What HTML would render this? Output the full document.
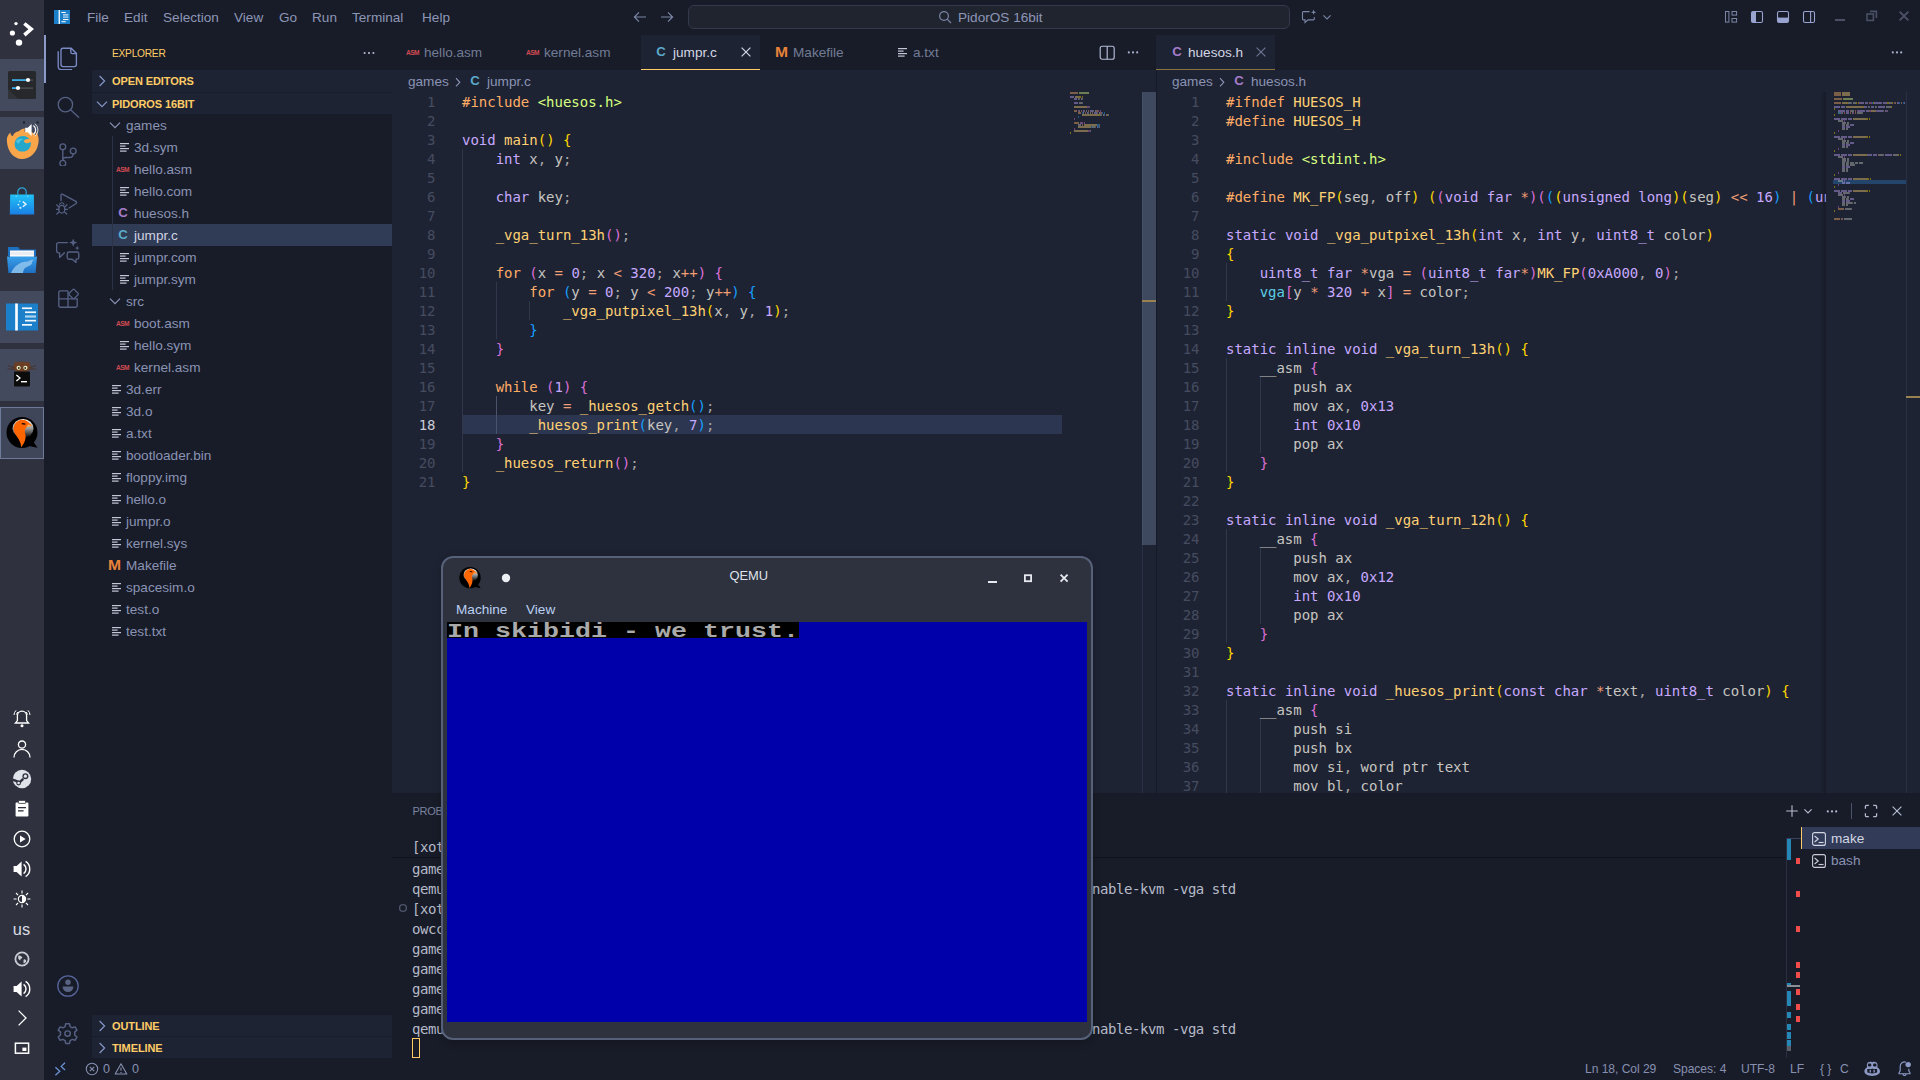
<!DOCTYPE html>
<html lang="en"><head><meta charset="utf-8"><title>jumpr.c - PidorOS 16bit - Visual Studio Code</title>
<style>
*{box-sizing:border-box;margin:0;padding:0}
html,body{width:1920px;height:1080px;overflow:hidden;background:#181c28;font-family:"Liberation Sans", "DejaVu Sans", sans-serif;font-size:13.6px;color:#8a93b4}
.abs{position:absolute}
div,span,i,svg{position:absolute}
.cl span,.t span,.row span.lbl,.inl{position:static}
.t{white-space:pre;line-height:1}
.lnum{width:40px;text-align:right;font:14px/19px "DejaVu Sans Mono", "Liberation Mono", monospace;height:19px;padding-top:1px}
.cl{font:14px/19px "DejaVu Sans Mono", "Liberation Mono", monospace;letter-spacing:-0.02px;white-space:pre;color:#c6c5c0;height:19px;padding-top:1px}
.ig{width:1px;height:19px;background:#31374a}
.row{left:92px;width:300px;height:22px;line-height:22px;white-space:pre}
.term{font:14px/20px "DejaVu Sans Mono", "Liberation Mono", monospace;letter-spacing:-0.43px;white-space:pre;color:#b6bac8;height:20px}
</style></head>
<body>
<div style="left:0px;top:0px;width:44px;height:1080px;background:#2f323e;"></div>
<div style="left:0px;top:59px;width:44px;height:52px;background:#434a5e;"></div>
<div style="left:0px;top:117px;width:44px;height:52px;background:#434a5e;"></div>
<div style="left:0px;top:291px;width:44px;height:52px;background:#434a5e;"></div>
<div style="left:0px;top:349px;width:44px;height:52px;background:#434a5e;"></div>
<div style="left:0px;top:407px;width:44px;height:52px;background:#3f4659;border:1px solid #6f7a99"></div>
<svg style="left:6px;top:19px;" width="32" height="32" viewBox="0 0 32 32"><circle cx="10" cy="4.6" r="1.7" fill="#fff"/><circle cx="6.4" cy="14" r="2.6" fill="#fff"/><circle cx="13" cy="23.6" r="3.2" fill="#fff"/><path d="M19.5 3.2 L28 10 L19.5 17.4 L17.2 14.6 L22.4 10.2 L17.2 5.8 Z" fill="#fff"/></svg>
<svg style="left:6px;top:69px;" width="32" height="32" viewBox="0 0 32 32"><rect x="2" y="2" width="28" height="28" rx="1.5" fill="#26282b"/><path d="M2 20 L12 30 H2Z" fill="#303337"/>
<rect x="6" y="10.2" width="15" height="1.8" fill="#3daee9"/><rect x="21" y="10.6" width="6" height="1" fill="#5b5f66"/><circle cx="22" cy="11" r="2.1" fill="#fff"/>
<rect x="6" y="18.2" width="5" height="1.8" fill="#3daee9"/><rect x="11" y="18.6" width="16" height="1" fill="#5b5f66"/><circle cx="12" cy="19" r="2.1" fill="#fff"/></svg>
<svg style="left:4px;top:121px;" width="40" height="40" viewBox="0 0 40 40"><path d="M3 21 C2.4 16 4.4 13 6.4 11.4 C6.4 13.4 7.4 14.6 8.8 15 C9.6 12.4 12 10.6 15 10.2 C16.6 8.6 19 7.4 21.4 7.6 C20.4 8.6 20.2 10 21 11 C25 9.6 29.4 11 31.6 14.4 C32.2 13 32 11.6 31.4 10.4 C34.4 13 35.4 18 34.2 23 C32.6 32 25.4 38 18 38 C9.4 38 3.6 30 3 21Z" fill="#f9a64a"/>
<path d="M10.6 23.4 C10.6 18.4 14.4 15 19 15 C22 15 24.4 16.4 25.4 18.4 C22.8 17.6 20.6 18.4 19.8 20.4 C21.4 22.6 24.6 22.6 26.8 21 C27.6 26 24 30.6 18.8 30.6 C14 30.6 10.6 27.4 10.6 23.4Z" fill="#23a8cc"/>
<path d="M12 20 C14 17.6 17.4 17 20 18.6 C17.4 18.8 15.6 20.2 15 22.4 C13.6 22.4 12.4 21.4 12 20Z" fill="#4fc3e0"/>
<rect x="19" y="0.5" width="2" height="2" fill="#1b1e26"/><rect x="32.6" y="0.5" width="2" height="2" fill="#1b1e26"/>
<path d="M21.2 6.8 h2.6 l3.8 -3.8 v12 l-3.8 -3.8 h-2.6Z" fill="#fff"/><path d="M29.4 4.6 a5.4 5.4 0 0 1 0 8.8" stroke="#fff" stroke-width="1.2" fill="none"/><path d="M31 2.8 a8 8 0 0 1 0 12.4" stroke="#fff" stroke-width="1" fill="none" opacity=".75"/></svg>
<svg style="left:6px;top:185px;" width="32" height="32" viewBox="0 0 32 32"><defs><linearGradient id="bag" x1="0" y1="0" x2="0" y2="1"><stop offset="0" stop-color="#21c3f7"/><stop offset="1" stop-color="#1a7fe3"/></linearGradient></defs>
<path d="M11.8 9.4 V7 a4.2 4.2 0 0 1 8.4 0 V9.4" fill="none" stroke="#2aa5d8" stroke-width="1.2"/>
<path d="M4.2 9.4 H27.8 L28.2 29.4 H3.8Z" fill="url(#bag)"/><rect x="9.6" y="10.6" width="1.2" height="1.2" fill="#8fe0ff"/><rect x="21.2" y="10.6" width="1.2" height="1.2" fill="#8fe0ff"/>
<circle cx="13.8" cy="16.2" r=".7" fill="#cfeeff"/><circle cx="12.4" cy="19.6" r=".9" fill="#cfeeff"/><circle cx="14.4" cy="22.8" r="1.1" fill="#cfeeff"/><path d="M16.8 16.6 L20 19.2 L16.8 21.8" fill="none" stroke="#e8f7ff" stroke-width="1.4"/></svg>
<svg style="left:6px;top:243px;" width="32" height="32" viewBox="0 0 32 32"><defs><linearGradient id="fld" x1="0" y1="0" x2="0" y2="1"><stop offset="0" stop-color="#3aa0ea"/><stop offset="1" stop-color="#1f6fc2"/></linearGradient></defs>
<path d="M2 4 H12 L14 6.5 H30 V13 H2Z" fill="#1d6fc0"/><rect x="4" y="7.5" width="24" height="8" fill="#fbfbfb"/><rect x="4" y="9" width="24" height="3" fill="#e9edf2"/>
<path d="M1 13.5 H31 L29.6 30 H2.4Z" fill="url(#fld)"/>
<path d="M5 30 C8 22.6 15 18 22 18.4 C24 16.8 26.4 16.4 28 17 C26.4 18 25.8 19 26 20.4 C24 23.6 20.6 23 18.6 25.6 C17.6 27 17 28.6 17 30Z" fill="#8ec4ee" opacity=".85"/></svg>
<svg style="left:6px;top:301px;" width="32" height="32" viewBox="0 0 32 32"><rect x="0" y="2.5" width="32" height="27" fill="#1b7fca"/><rect x="9.2" y="2.5" width="2.6" height="27" fill="#fff"/>
<rect x="16" y="6.4" width="10" height="1.7" fill="#fff" opacity=".95"/><rect x="19" y="10.4" width="11" height="1.7" fill="#fff" opacity=".95"/><rect x="19" y="14.4" width="11" height="2.2" fill="#bfe0f6" opacity=".9"/><rect x="19" y="18.8" width="11" height="1.7" fill="#fff" opacity=".95"/><rect x="16" y="23" width="10" height="1.7" fill="#fff" opacity=".95"/></svg>
<svg style="left:6px;top:359px;" width="32" height="32" viewBox="0 0 32 32"><path d="M7.5 6 L9.5 2.2 L13 4.6 H19 L22.5 2.2 L24.5 6 V11 H7.5Z" fill="#6b3f26"/><ellipse cx="16" cy="8" rx="8.6" ry="5.4" fill="#6b3f26"/>
<circle cx="12.6" cy="8.8" r="2.1" fill="#e9e9c0"/><circle cx="19.4" cy="8.8" r="2.1" fill="#e9e9c0"/><circle cx="12.8" cy="9" r=".9" fill="#222"/><circle cx="19.2" cy="9" r=".9" fill="#222"/>
<path d="M2 6.5 L9 9 M1.5 10 L9 10.2 M30 6.5 L23 9 M30.5 10 L23 10.2" stroke="#4a2a18" stroke-width=".7"/>
<rect x="8" y="12.5" width="16" height="15" rx="1" fill="#0c0c0c"/><path d="M10.4 16 L14 19 L10.4 22" fill="none" stroke="#fff" stroke-width="1.3"/><rect x="15" y="22" width="6" height="1.4" fill="#fff"/></svg>
<svg style="left:6px;top:417px;" width="32" height="32" viewBox="0 0 32 32"><defs><linearGradient id="qg32" x1="0" y1="0" x2="0" y2="1"><stop offset="0" stop-color="#fff"/><stop offset=".5" stop-color="#9a9a9a"/><stop offset="1" stop-color="#000"/></linearGradient></defs>
<circle cx="16" cy="15.5" r="15.5" fill="#000"/>
<ellipse cx="17" cy="11.5" rx="10.5" ry="9.5" fill="url(#qg32)"/>
<path d="M23 29 L31.5 30.8 L26.6 23.6Z" fill="#000"/>
<path d="M7.6 11 C8.6 4 15.6 0.8 21.2 4.2 L26.2 8.8 L20.6 9.8 C18.2 12.6 18.6 15.6 19.6 18.6 C20 23 17.6 27.4 15.2 30.4 C15 25 12.4 21.6 10.2 18.4 C8.4 15.8 7.2 14 7.6 11Z" fill="#f60"/>
<path d="M20.6 9.8 L26.2 8.8 L22 7.6Z" fill="#ffb36b"/><path d="M15.8 6.6 l3.6 .5" stroke="#000" stroke-width="1.3"/></svg>
<svg style="left:11px;top:708px;" width="22" height="22" viewBox="0 0 22 22"><path d="M11 3.2 a4.6 4.6 0 0 1 4.6 4.6 v4.8 l2 2.4 H4.4 l2 -2.4 V7.8 A4.6 4.6 0 0 1 11 3.2Z" fill="none" stroke="#fff" stroke-width="1.3"/><circle cx="11" cy="17.8" r="1.5" fill="#fff"/><path d="M5 2.4 a7 7 0 0 0 -2 4.6 M17 2.4 a7 7 0 0 1 2 4.6 M6.8 4 a4.6 4.6 0 0 0 -1.2 2.6 M15.2 4 a4.6 4.6 0 0 1 1.2 2.6" fill="none" stroke="#fff" stroke-width="1"/></svg>
<svg style="left:11px;top:738px;" width="22" height="22" viewBox="0 0 22 22"><circle cx="11" cy="6.6" r="3.6" fill="none" stroke="#fff" stroke-width="1.3"/><path d="M3 19.4 a8 8 0 0 1 16 0" fill="none" stroke="#fff" stroke-width="1.3"/></svg>
<svg style="left:11px;top:768px;" width="22" height="22" viewBox="0 0 22 22"><circle cx="11" cy="11" r="9.2" fill="#dfe3ea"/><path d="M1.8 11.6 L8.6 14.4 L12.2 10.8 L12.2 10.8" stroke="#2f323e" stroke-width="2.4" fill="none"/><circle cx="14.4" cy="8.2" r="3" fill="#2f323e"/><circle cx="14.4" cy="8.2" r="1.6" fill="#dfe3ea"/><circle cx="7.6" cy="15" r="2.4" fill="#2f323e"/><circle cx="7.6" cy="15" r="1.3" fill="#dfe3ea"/></svg>
<svg style="left:11px;top:798px;" width="22" height="22" viewBox="0 0 22 22"><rect x="4.6" y="4.6" width="12.8" height="14" rx=".8" fill="#fff"/><rect x="7.4" y="2.4" width="7.2" height="3" rx=".6" fill="#fff" stroke="#2f323e" stroke-width=".8"/><rect x="7" y="9" width="8" height="1.3" fill="#2f323e"/><rect x="7" y="12.2" width="5.6" height="1.3" fill="#2f323e"/></svg>
<svg style="left:11px;top:828px;" width="22" height="22" viewBox="0 0 22 22"><circle cx="11" cy="11" r="7.8" fill="none" stroke="#fff" stroke-width="1.3"/><path d="M9 7.4 L14.6 11 L9 14.6Z" fill="#fff"/></svg>
<svg style="left:11px;top:858px;" width="22" height="22" viewBox="0 0 22 22"><path d="M2.6 8 h3 l5 -4.6 v15.2 l-5 -4.6 h-3Z" fill="#fff"/><path d="M12.6 6.4 a5.6 5.6 0 0 1 0 9.2" stroke="#fff" stroke-width="1.4" fill="none"/><path d="M14.6 3.4 a9 9 0 0 1 0 15.2" stroke="#fff" stroke-width="1.4" fill="none"/></svg>
<svg style="left:11px;top:888px;" width="22" height="22" viewBox="0 0 22 22"><circle cx="11" cy="11" r="3.6" fill="none" stroke="#fff" stroke-width="1.2"/><path d="M11 7.4 a3.6 3.6 0 0 1 0 7.2Z" fill="#fff"/><path d="M11 2.6 v3 M11 16.4 v3 M2.6 11 h3 M16.4 11 h3 M5 5 l2.1 2.1 M14.9 14.9 l2.1 2.1 M5 17 l2.1 -2.1 M14.9 7.1 l2.1 -2.1" stroke="#fff" stroke-width="1.1"/></svg>
<div style="left:12.8px;top:917.5px;font-size:16.4px;line-height:23px;height:23px;white-space:pre;color:#d9dce3;">us</div>
<svg style="left:11px;top:948px;" width="22" height="22" viewBox="0 0 22 22"><circle cx="11" cy="11" r="6.6" fill="none" stroke="#c9ccd3" stroke-width="1.8"/><path d="M7.4 7.6 c2 -.6 3 1 4 1.6 c-.4 1.6 -2.4 1.4 -2.2 3.4 c-1.6 -.6 -2.8 -3 -1.8 -5Z M12.8 11.4 c1.6 -.2 2.6 .8 2.4 2.4 c-1 1.4 -2 1.8 -2.8 1.2 c.6 -1.2 -.4 -2.4 .4 -3.6Z" fill="#c9ccd3"/></svg>
<svg style="left:11px;top:978px;" width="22" height="22" viewBox="0 0 22 22"><path d="M2.6 8 h3 l5 -4.6 v15.2 l-5 -4.6 h-3Z" fill="#fff"/><path d="M12.6 6.4 a5.6 5.6 0 0 1 0 9.2" stroke="#fff" stroke-width="1.4" fill="none"/><path d="M14.6 3.4 a9 9 0 0 1 0 15.2" stroke="#fff" stroke-width="1.4" fill="none"/></svg>
<svg style="left:11px;top:1007px;" width="22" height="22" viewBox="0 0 22 22"><path d="M7.6 3.6 L15 11 L7.6 18.4" fill="none" stroke="#fff" stroke-width="1.3"/></svg>
<svg style="left:11px;top:1037px;" width="22" height="22" viewBox="0 0 22 22"><rect x="4.4" y="6.2" width="13.2" height="10" fill="none" stroke="#fff" stroke-width="1.5"/><rect x="11.4" y="10.6" width="4" height="3.4" fill="#fff"/></svg>
<div style="left:44px;top:0px;width:1876px;height:35px;background:#181c28;"></div>
<div style="left:44px;top:35px;width:48px;height:1023px;background:#181c28;"></div>
<div style="left:92px;top:35px;width:300px;height:1023px;background:#181c28;"></div>
<div style="left:392px;top:35px;width:1528px;height:35px;background:#181c28;"></div>
<div style="left:392px;top:70px;width:765px;height:723px;background:#1e2333;"></div>
<div style="left:1157px;top:70px;width:763px;height:723px;background:#1e2333;"></div>
<div style="left:1156px;top:70px;width:1px;height:723px;background:#171a26;"></div>
<div style="left:392px;top:793px;width:1528px;height:265px;background:#181c28;"></div>
<div style="left:44px;top:1058px;width:1876px;height:22px;background:#181c28;"></div>
<svg style="left:54px;top:10px;" width="16" height="14" viewBox="0 0 16 14"><rect width="16" height="14" fill="#1b7fca"/><rect x="4.6" y="0" width="1.3" height="14" fill="#fff"/><rect x="7.4" y="2" width="4.4" height="1" fill="#fff"/><rect x="9" y="4.4" width="5.4" height="1" fill="#fff"/><rect x="9" y="6.4" width="5.4" height="1.4" fill="#a9d3f0"/><rect x="9" y="9" width="5.4" height="1" fill="#fff"/><rect x="7.4" y="11.2" width="4.4" height="1" fill="#fff"/></svg>
<div style="left:87px;top:7.5px;font-size:13.6px;line-height:19px;height:19px;white-space:pre;color:#8d96b6;">File</div>
<div style="left:124px;top:7.5px;font-size:13.6px;line-height:19px;height:19px;white-space:pre;color:#8d96b6;">Edit</div>
<div style="left:163px;top:7.5px;font-size:13.6px;line-height:19px;height:19px;white-space:pre;color:#8d96b6;">Selection</div>
<div style="left:234px;top:7.5px;font-size:13.6px;line-height:19px;height:19px;white-space:pre;color:#8d96b6;">View</div>
<div style="left:279px;top:7.5px;font-size:13.6px;line-height:19px;height:19px;white-space:pre;color:#8d96b6;">Go</div>
<div style="left:312px;top:7.5px;font-size:13.6px;line-height:19px;height:19px;white-space:pre;color:#8d96b6;">Run</div>
<div style="left:352px;top:7.5px;font-size:13.6px;line-height:19px;height:19px;white-space:pre;color:#8d96b6;">Terminal</div>
<div style="left:422px;top:7.5px;font-size:13.6px;line-height:19px;height:19px;white-space:pre;color:#8d96b6;">Help</div>
<svg style="left:632px;top:9px;" width="16" height="16" viewBox="0 0 16 16"><path d="M14 8 H2.6 M7 3.4 L2.4 8 L7 12.6" fill="none" stroke="#7b85a6" stroke-width="1.2"/></svg>
<svg style="left:659px;top:9px;" width="16" height="16" viewBox="0 0 16 16"><path d="M2 8 H13.4 M9 3.4 L13.6 8 L9 12.6" fill="none" stroke="#7b85a6" stroke-width="1.2"/></svg>
<div style="left:688px;top:5px;width:602px;height:24px;background:#20242f;border:1px solid #343a4d;border-radius:6px"></div>
<svg style="left:937px;top:9px;" width="16" height="16" viewBox="0 0 16 16"><circle cx="7" cy="7" r="4.4" fill="none" stroke="#7b85a6" stroke-width="1.2"/><path d="M10.2 10.2 L14 14" stroke="#7b85a6" stroke-width="1.2"/></svg>
<div style="left:958px;top:7.5px;font-size:13.6px;line-height:19px;height:19px;white-space:pre;color:#8d96b6;">PidorOS 16bit</div>
<svg style="left:1301px;top:9px;" width="16" height="16" viewBox="0 0 16 16"><path d="M8.6 2.6 H2.4 a.9 .9 0 0 0 -.9 .9 V10 a.9 .9 0 0 0 .9 .9 H4 v2.6 L7 10.9 h5.4 a.9 .9 0 0 0 .9 -.9 V8" fill="none" stroke="#7b85a6" stroke-width="1.1"/><path d="M12.6 .6 l.7 1.9 l1.9 .7 l-1.9 .7 l-.7 1.9 l-.7 -1.9 l-1.9 -.7 l1.9 -.7Z" fill="#7b85a6"/></svg>
<svg style="left:1321px;top:11px;" width="12" height="12" viewBox="0 0 12 12"><path d="M2.4 4.4 L6 8 L9.6 4.4" fill="none" stroke="#7b85a6" stroke-width="1.1"/></svg>
<svg style="left:1723px;top:9px;" width="16" height="16" viewBox="0 0 16 16"><rect x="2.5" y="2.5" width="3.4" height="10.6" fill="none" stroke="#7b85a6" stroke-width="1"/><rect x="9" y="2.5" width="4.6" height="3.6" fill="none" stroke="#7b85a6" stroke-width="1"/><rect x="9" y="9.5" width="4.6" height="3.6" fill="none" stroke="#7b85a6" stroke-width="1"/></svg>
<svg style="left:1749px;top:9px;" width="16" height="16" viewBox="0 0 16 16"><rect x="2.5" y="2.5" width="11" height="11" rx="1.6" fill="none" stroke="#98a4cf" stroke-width="1.1"/><path d="M3 3 H7 V13 H3Z" fill="#98a4cf"/></svg>
<svg style="left:1775px;top:9px;" width="16" height="16" viewBox="0 0 16 16"><rect x="2.5" y="2.5" width="11" height="11" rx="1.6" fill="none" stroke="#98a4cf" stroke-width="1.1"/><path d="M3 8.6 H13 V13 H3Z" fill="#98a4cf"/></svg>
<svg style="left:1801px;top:9px;" width="16" height="16" viewBox="0 0 16 16"><rect x="2.5" y="2.5" width="11" height="11" rx="1.6" fill="none" stroke="#98a4cf" stroke-width="1.1"/><path d="M9.6 2.6 V13.4" stroke="#98a4cf" stroke-width="1.1"/></svg>
<div style="left:1835px;top:19px;width:10px;height:2px;background:#4a5066;"></div>
<svg style="left:1866px;top:10px;" width="12" height="12" viewBox="0 0 12 12"><rect x="1" y="4" width="6.4" height="6.4" fill="none" stroke="#4a5066" stroke-width="1.6"/><path d="M4 1.4 H10.4 V8" fill="none" stroke="#4a5066" stroke-width="1.6"/></svg>
<svg style="left:1898px;top:10px;" width="12" height="12" viewBox="0 0 12 12"><path d="M1.6 1.6 L10.4 10.4 M10.4 1.6 L1.6 10.4" stroke="#4a5066" stroke-width="2"/></svg>
<div style="left:44px;top:35px;width:2px;height:48px;background:#8b9ac6;"></div>
<svg style="left:56px;top:46px;" width="24" height="24" viewBox="0 0 24 24"><path d="M7 2.2 H15.2 L20.4 7.4 V18.6 a2 2 0 0 1 -2 2 H7 a2 2 0 0 1 -2 -2 V4.2 a2 2 0 0 1 2 -2Z M14.8 2.4 V6 a1.6 1.6 0 0 0 1.6 1.6 H20.2" fill="none" stroke="#7989c4" stroke-width="1.35"/><path d="M2.2 5.6 V20.4 a3.2 3.2 0 0 0 3.2 3.2 H15.6" fill="none" stroke="#7989c4" stroke-width="1.35" stroke-linecap="round"/></svg>
<svg style="left:56px;top:94px;" width="24" height="24" viewBox="0 0 24 24"><circle cx="9.4" cy="10.6" r="7.2" fill="none" stroke="#556083" stroke-width="1.35"/><path d="M14.6 15.8 L22.6 23.2" stroke="#556083" stroke-width="1.35" stroke-linecap="round"/></svg>
<svg style="left:56px;top:142px;" width="24" height="24" viewBox="0 0 24 24"><circle cx="6.8" cy="4.8" r="2.9" fill="none" stroke="#556083" stroke-width="1.35"/><circle cx="6.8" cy="21.2" r="2.9" fill="none" stroke="#556083" stroke-width="1.35"/><circle cx="17.2" cy="9" r="2.9" fill="none" stroke="#556083" stroke-width="1.35"/><path d="M6.8 7.7 V18.3 M17.2 11.9 c0 3 -2 3.6 -4.4 3.6 H9.6 a2.8 2.8 0 0 0 -2.8 2.8" fill="none" stroke="#556083" stroke-width="1.35"/></svg>
<svg style="left:56px;top:191px;" width="24" height="24" viewBox="0 0 24 24"><path d="M5 9.4 V4.4 Q5 2.4 6.8 3.4 L19.8 10.4 Q21.4 11.6 19.8 12.8 L13 17" fill="none" stroke="#556083" stroke-width="1.35" stroke-linecap="round"/><ellipse cx="5.8" cy="18.2" rx="3" ry="3.9" fill="none" stroke="#556083" stroke-width="1.35"/><path d="M3.6 13.4 a2.3 2.3 0 0 1 4.4 0 M2.9 16 L0.6 13.8 M8.7 16 L11 13.8 M2.8 18.4 H0.2 M8.8 18.4 H11.4 M3.2 20.8 L0.8 23 M8.4 20.8 L10.8 23" fill="none" stroke="#556083" stroke-width="1.2" stroke-linecap="round"/></svg>
<svg style="left:56px;top:239px;" width="24" height="24" viewBox="0 0 24 24"><path d="M11.4 3.6 H2.6 a2 2 0 0 0 -2 2 V11.8 a2 2 0 0 0 2 2 H3.6 V18.4 L8.4 13.8" fill="none" stroke="#556083" stroke-width="1.35" stroke-linejoin="round" stroke-linecap="round"/><path d="M13 13 H21 a1.8 1.8 0 0 1 1.8 1.8 V18.4 a1.8 1.8 0 0 1 -1.8 1.8 H20 V23.4 L16.2 20.2 H13 a1.8 1.8 0 0 1 -1.8 -1.8 V14.8 a1.8 1.8 0 0 1 1.8 -1.8Z" fill="none" stroke="#556083" stroke-width="1.35" stroke-linejoin="round"/><path d="M17.2 -0.6 l1.15 3.05 l3.05 1.15 l-3.05 1.15 l-1.15 3.05 l-1.15 -3.05 l-3.05 -1.15 l3.05 -1.15Z" fill="#556083"/><path d="M21.2 6.8 l.65 1.65 l1.65 .65 l-1.65 .65 l-.65 1.65 l-.65 -1.65 l-1.65 -.65 l1.65 -.65Z" fill="#556083"/></svg>
<svg style="left:56px;top:287px;" width="24" height="24" viewBox="0 0 24 24"><path d="M12 3.8 H4.2 a1.4 1.4 0 0 0 -1.4 1.4 V18.8 a1.4 1.4 0 0 0 1.4 1.4 H19.8 a1.4 1.4 0 0 0 1.4 -1.4 V11.8 H2.8 M12 3.8 V20.2" fill="none" stroke="#556083" stroke-width="1.35"/><rect x="13.9" y="3.3" width="7.4" height="7.4" rx="1.2" transform="rotate(45 17.6 7)" fill="#181c28" stroke="#556083" stroke-width="1.35"/></svg>
<svg style="left:56px;top:974px;" width="24" height="24" viewBox="0 0 24 24"><circle cx="12" cy="12" r="10.2" fill="none" stroke="#56649a" stroke-width="1.3"/><circle cx="12" cy="8.2" r="2.7" fill="#596383"/><path d="M6.6 12.6 H17.4 a5.4 5.4 0 0 1 -10.8 0Z" fill="#596383"/></svg>
<svg style="left:55.4px;top:1021.4px;" width="25.2" height="25.2" viewBox="0 0 24 24"><circle cx="12" cy="12" r="2.6" fill="none" stroke="#556083" stroke-width="1.4"/><path d="M10.2 2.6 h3.6 l.6 2.8 l2 1.1 l2.7 -.9 l1.8 3.1 l-2.1 1.9 v2.8 l2.1 1.9 l-1.8 3.1 l-2.7 -.9 l-2 1.1 l-.6 2.8 h-3.6 l-.6 -2.8 l-2 -1.1 l-2.7 .9 l-1.8 -3.1 l2.1 -1.9 v-2.8 l-2.1 -1.9 l1.8 -3.1 l2.7 .9 l2 -1.1Z" fill="none" stroke="#556083" stroke-width="1.4" stroke-linejoin="round"/></svg>
<div style="left:112px;top:46.6px;font-size:10.2px;line-height:14px;height:14px;white-space:pre;color:#ffcc66;letter-spacing:-0.25px;">EXPLORER</div>
<svg style="left:361px;top:45px;" width="16" height="16" viewBox="0 0 16 16"><circle cx="3.6" cy="8" r="1.05" fill="#b4bcd6"/><circle cx="8" cy="8" r="1.05" fill="#b4bcd6"/><circle cx="12.4" cy="8" r="1.05" fill="#b4bcd6"/></svg>
<div style="left:92px;top:70px;width:300px;height:22px;background:#1e2333;"></div>
<svg style="left:94px;top:73px;" width="16" height="16" viewBox="0 0 16 16"><path d="M5.6 3 L10.6 8 L5.6 13" fill="none" stroke="#8497c8" stroke-width="1.2"/></svg>
<div style="left:112px;top:73.5px;font-size:11px;line-height:15px;height:15px;white-space:pre;color:#ffcc66;font-weight:700;letter-spacing:-0.1px;">OPEN EDITORS</div>
<div style="left:92px;top:93px;width:300px;height:21px;background:#1e2333;"></div>
<svg style="left:94px;top:96px;" width="16" height="16" viewBox="0 0 16 16"><path d="M3 5.6 L8 10.6 L13 5.6" fill="none" stroke="#8497c8" stroke-width="1.2"/></svg>
<div style="left:112px;top:96.5px;font-size:11px;line-height:15px;height:15px;white-space:pre;color:#ffcc66;font-weight:700;letter-spacing:-0.1px;">PIDOROS 16BIT</div>
<div style="left:92px;top:1015px;width:300px;height:21px;background:#1e2333;"></div>
<svg style="left:94px;top:1018px;" width="16" height="16" viewBox="0 0 16 16"><path d="M5.6 3 L10.6 8 L5.6 13" fill="none" stroke="#8497c8" stroke-width="1.2"/></svg>
<div style="left:112px;top:1018.5px;font-size:11px;line-height:15px;height:15px;white-space:pre;color:#ffcc66;font-weight:700;letter-spacing:-0.1px;">OUTLINE</div>
<div style="left:92px;top:1037px;width:300px;height:21px;background:#1e2333;"></div>
<svg style="left:94px;top:1040px;" width="16" height="16" viewBox="0 0 16 16"><path d="M5.6 3 L10.6 8 L5.6 13" fill="none" stroke="#8497c8" stroke-width="1.2"/></svg>
<div style="left:112px;top:1040.5px;font-size:11px;line-height:15px;height:15px;white-space:pre;color:#ffcc66;font-weight:700;letter-spacing:-0.1px;">TIMELINE</div>
<svg style="left:107px;top:117px;" width="16" height="16" viewBox="0 0 16 16"><path d="M3 5.6 L8 10.6 L13 5.6" fill="none" stroke="#8a93b4" stroke-width="1.2"/></svg>
<div style="left:126px;top:115.5px;font-size:13.6px;line-height:19px;height:19px;white-space:pre;color:#8a93b4;">games</div>
<svg style="left:119.5px;top:142.5px;" width="10" height="10" viewBox="0 0 10 10"><rect x="0" y="0" width="9" height="1.2" fill="#c3c8d6"/><rect x="0" y="2.5" width="5.6" height="1.2" fill="#c3c8d6"/><rect x="0" y="5" width="9" height="1.2" fill="#c3c8d6"/><rect x="0" y="7.5" width="6.6" height="1.2" fill="#c3c8d6"/></svg>
<div style="left:134px;top:137.5px;font-size:13.6px;line-height:19px;height:19px;white-space:pre;color:#8a93b4;">3d.sym</div>
<div style="left:116px;top:164.5px;font-size:6.6px;line-height:9px;height:9px;white-space:pre;color:#d04a52;font-weight:700;letter-spacing:-0.55px;">ASM</div>
<div style="left:134px;top:159.5px;font-size:13.6px;line-height:19px;height:19px;white-space:pre;color:#8a93b4;">hello.asm</div>
<svg style="left:119.5px;top:186.5px;" width="10" height="10" viewBox="0 0 10 10"><rect x="0" y="0" width="9" height="1.2" fill="#c3c8d6"/><rect x="0" y="2.5" width="5.6" height="1.2" fill="#c3c8d6"/><rect x="0" y="5" width="9" height="1.2" fill="#c3c8d6"/><rect x="0" y="7.5" width="6.6" height="1.2" fill="#c3c8d6"/></svg>
<div style="left:134px;top:181.5px;font-size:13.6px;line-height:19px;height:19px;white-space:pre;color:#8a93b4;">hello.com</div>
<div style="left:118.2px;top:204.3px;font-size:13.2px;line-height:18px;height:18px;white-space:pre;color:#a57cc8;font-weight:700;">C</div>
<div style="left:134px;top:203.5px;font-size:13.6px;line-height:19px;height:19px;white-space:pre;color:#8a93b4;">huesos.h</div>
<div style="left:92px;top:224px;width:300px;height:22px;background:#303b55;"></div>
<div style="left:118.2px;top:226.3px;font-size:13.2px;line-height:18px;height:18px;white-space:pre;color:#5aa8c9;font-weight:700;">C</div>
<div style="left:134px;top:225.5px;font-size:13.6px;line-height:19px;height:19px;white-space:pre;color:#cfd3e2;">jumpr.c</div>
<svg style="left:119.5px;top:252.5px;" width="10" height="10" viewBox="0 0 10 10"><rect x="0" y="0" width="9" height="1.2" fill="#c3c8d6"/><rect x="0" y="2.5" width="5.6" height="1.2" fill="#c3c8d6"/><rect x="0" y="5" width="9" height="1.2" fill="#c3c8d6"/><rect x="0" y="7.5" width="6.6" height="1.2" fill="#c3c8d6"/></svg>
<div style="left:134px;top:247.5px;font-size:13.6px;line-height:19px;height:19px;white-space:pre;color:#8a93b4;">jumpr.com</div>
<svg style="left:119.5px;top:274.5px;" width="10" height="10" viewBox="0 0 10 10"><rect x="0" y="0" width="9" height="1.2" fill="#c3c8d6"/><rect x="0" y="2.5" width="5.6" height="1.2" fill="#c3c8d6"/><rect x="0" y="5" width="9" height="1.2" fill="#c3c8d6"/><rect x="0" y="7.5" width="6.6" height="1.2" fill="#c3c8d6"/></svg>
<div style="left:134px;top:269.5px;font-size:13.6px;line-height:19px;height:19px;white-space:pre;color:#8a93b4;">jumpr.sym</div>
<svg style="left:107px;top:293px;" width="16" height="16" viewBox="0 0 16 16"><path d="M3 5.6 L8 10.6 L13 5.6" fill="none" stroke="#8a93b4" stroke-width="1.2"/></svg>
<div style="left:126px;top:291.5px;font-size:13.6px;line-height:19px;height:19px;white-space:pre;color:#8a93b4;">src</div>
<div style="left:116px;top:318.5px;font-size:6.6px;line-height:9px;height:9px;white-space:pre;color:#d04a52;font-weight:700;letter-spacing:-0.55px;">ASM</div>
<div style="left:134px;top:313.5px;font-size:13.6px;line-height:19px;height:19px;white-space:pre;color:#8a93b4;">boot.asm</div>
<svg style="left:119.5px;top:340.5px;" width="10" height="10" viewBox="0 0 10 10"><rect x="0" y="0" width="9" height="1.2" fill="#c3c8d6"/><rect x="0" y="2.5" width="5.6" height="1.2" fill="#c3c8d6"/><rect x="0" y="5" width="9" height="1.2" fill="#c3c8d6"/><rect x="0" y="7.5" width="6.6" height="1.2" fill="#c3c8d6"/></svg>
<div style="left:134px;top:335.5px;font-size:13.6px;line-height:19px;height:19px;white-space:pre;color:#8a93b4;">hello.sym</div>
<div style="left:116px;top:362.5px;font-size:6.6px;line-height:9px;height:9px;white-space:pre;color:#d04a52;font-weight:700;letter-spacing:-0.55px;">ASM</div>
<div style="left:134px;top:357.5px;font-size:13.6px;line-height:19px;height:19px;white-space:pre;color:#8a93b4;">kernel.asm</div>
<svg style="left:111.5px;top:384.5px;" width="10" height="10" viewBox="0 0 10 10"><rect x="0" y="0" width="9" height="1.2" fill="#c3c8d6"/><rect x="0" y="2.5" width="5.6" height="1.2" fill="#c3c8d6"/><rect x="0" y="5" width="9" height="1.2" fill="#c3c8d6"/><rect x="0" y="7.5" width="6.6" height="1.2" fill="#c3c8d6"/></svg>
<div style="left:126px;top:379.5px;font-size:13.6px;line-height:19px;height:19px;white-space:pre;color:#8a93b4;">3d.err</div>
<svg style="left:111.5px;top:406.5px;" width="10" height="10" viewBox="0 0 10 10"><rect x="0" y="0" width="9" height="1.2" fill="#c3c8d6"/><rect x="0" y="2.5" width="5.6" height="1.2" fill="#c3c8d6"/><rect x="0" y="5" width="9" height="1.2" fill="#c3c8d6"/><rect x="0" y="7.5" width="6.6" height="1.2" fill="#c3c8d6"/></svg>
<div style="left:126px;top:401.5px;font-size:13.6px;line-height:19px;height:19px;white-space:pre;color:#8a93b4;">3d.o</div>
<svg style="left:111.5px;top:428.5px;" width="10" height="10" viewBox="0 0 10 10"><rect x="0" y="0" width="9" height="1.2" fill="#c3c8d6"/><rect x="0" y="2.5" width="5.6" height="1.2" fill="#c3c8d6"/><rect x="0" y="5" width="9" height="1.2" fill="#c3c8d6"/><rect x="0" y="7.5" width="6.6" height="1.2" fill="#c3c8d6"/></svg>
<div style="left:126px;top:423.5px;font-size:13.6px;line-height:19px;height:19px;white-space:pre;color:#8a93b4;">a.txt</div>
<svg style="left:111.5px;top:450.5px;" width="10" height="10" viewBox="0 0 10 10"><rect x="0" y="0" width="9" height="1.2" fill="#c3c8d6"/><rect x="0" y="2.5" width="5.6" height="1.2" fill="#c3c8d6"/><rect x="0" y="5" width="9" height="1.2" fill="#c3c8d6"/><rect x="0" y="7.5" width="6.6" height="1.2" fill="#c3c8d6"/></svg>
<div style="left:126px;top:445.5px;font-size:13.6px;line-height:19px;height:19px;white-space:pre;color:#8a93b4;">bootloader.bin</div>
<svg style="left:111.5px;top:472.5px;" width="10" height="10" viewBox="0 0 10 10"><rect x="0" y="0" width="9" height="1.2" fill="#c3c8d6"/><rect x="0" y="2.5" width="5.6" height="1.2" fill="#c3c8d6"/><rect x="0" y="5" width="9" height="1.2" fill="#c3c8d6"/><rect x="0" y="7.5" width="6.6" height="1.2" fill="#c3c8d6"/></svg>
<div style="left:126px;top:467.5px;font-size:13.6px;line-height:19px;height:19px;white-space:pre;color:#8a93b4;">floppy.img</div>
<svg style="left:111.5px;top:494.5px;" width="10" height="10" viewBox="0 0 10 10"><rect x="0" y="0" width="9" height="1.2" fill="#c3c8d6"/><rect x="0" y="2.5" width="5.6" height="1.2" fill="#c3c8d6"/><rect x="0" y="5" width="9" height="1.2" fill="#c3c8d6"/><rect x="0" y="7.5" width="6.6" height="1.2" fill="#c3c8d6"/></svg>
<div style="left:126px;top:489.5px;font-size:13.6px;line-height:19px;height:19px;white-space:pre;color:#8a93b4;">hello.o</div>
<svg style="left:111.5px;top:516.5px;" width="10" height="10" viewBox="0 0 10 10"><rect x="0" y="0" width="9" height="1.2" fill="#c3c8d6"/><rect x="0" y="2.5" width="5.6" height="1.2" fill="#c3c8d6"/><rect x="0" y="5" width="9" height="1.2" fill="#c3c8d6"/><rect x="0" y="7.5" width="6.6" height="1.2" fill="#c3c8d6"/></svg>
<div style="left:126px;top:511.5px;font-size:13.6px;line-height:19px;height:19px;white-space:pre;color:#8a93b4;">jumpr.o</div>
<svg style="left:111.5px;top:538.5px;" width="10" height="10" viewBox="0 0 10 10"><rect x="0" y="0" width="9" height="1.2" fill="#c3c8d6"/><rect x="0" y="2.5" width="5.6" height="1.2" fill="#c3c8d6"/><rect x="0" y="5" width="9" height="1.2" fill="#c3c8d6"/><rect x="0" y="7.5" width="6.6" height="1.2" fill="#c3c8d6"/></svg>
<div style="left:126px;top:533.5px;font-size:13.6px;line-height:19px;height:19px;white-space:pre;color:#8a93b4;">kernel.sys</div>
<div style="left:107.5px;top:554.5px;font-size:14px;line-height:20px;height:20px;white-space:pre;color:#e8823a;font-weight:700;transform:scaleX(1.12);transform-origin:0 50%;">M</div>
<div style="left:126px;top:555.5px;font-size:13.6px;line-height:19px;height:19px;white-space:pre;color:#8a93b4;">Makefile</div>
<svg style="left:111.5px;top:582.5px;" width="10" height="10" viewBox="0 0 10 10"><rect x="0" y="0" width="9" height="1.2" fill="#c3c8d6"/><rect x="0" y="2.5" width="5.6" height="1.2" fill="#c3c8d6"/><rect x="0" y="5" width="9" height="1.2" fill="#c3c8d6"/><rect x="0" y="7.5" width="6.6" height="1.2" fill="#c3c8d6"/></svg>
<div style="left:126px;top:577.5px;font-size:13.6px;line-height:19px;height:19px;white-space:pre;color:#8a93b4;">spacesim.o</div>
<svg style="left:111.5px;top:604.5px;" width="10" height="10" viewBox="0 0 10 10"><rect x="0" y="0" width="9" height="1.2" fill="#c3c8d6"/><rect x="0" y="2.5" width="5.6" height="1.2" fill="#c3c8d6"/><rect x="0" y="5" width="9" height="1.2" fill="#c3c8d6"/><rect x="0" y="7.5" width="6.6" height="1.2" fill="#c3c8d6"/></svg>
<div style="left:126px;top:599.5px;font-size:13.6px;line-height:19px;height:19px;white-space:pre;color:#8a93b4;">test.o</div>
<svg style="left:111.5px;top:626.5px;" width="10" height="10" viewBox="0 0 10 10"><rect x="0" y="0" width="9" height="1.2" fill="#c3c8d6"/><rect x="0" y="2.5" width="5.6" height="1.2" fill="#c3c8d6"/><rect x="0" y="5" width="9" height="1.2" fill="#c3c8d6"/><rect x="0" y="7.5" width="6.6" height="1.2" fill="#c3c8d6"/></svg>
<div style="left:126px;top:621.5px;font-size:13.6px;line-height:19px;height:19px;white-space:pre;color:#8a93b4;">test.txt</div>
<div style="left:112px;top:136px;width:1px;height:154px;background:#2c3347;"></div>
<div style="left:406px;top:47.5px;font-size:6.6px;line-height:9px;height:9px;white-space:pre;color:#d04a52;font-weight:700;letter-spacing:-0.55px;">ASM</div>
<div style="left:424px;top:42.5px;font-size:13.6px;line-height:19px;height:19px;white-space:pre;color:#727b95;">hello.asm</div>
<div style="left:526px;top:47.5px;font-size:6.6px;line-height:9px;height:9px;white-space:pre;color:#d04a52;font-weight:700;letter-spacing:-0.55px;">ASM</div>
<div style="left:544px;top:42.5px;font-size:13.6px;line-height:19px;height:19px;white-space:pre;color:#727b95;">kernel.asm</div>
<div style="left:641px;top:35px;width:119px;height:35px;background:#1e2333;"></div>
<div style="left:641px;top:69px;width:119px;height:1px;background:#ffcc66;"></div>
<div style="left:656.2px;top:43.3px;font-size:13.2px;line-height:18px;height:18px;white-space:pre;color:#5aa8c9;font-weight:700;">C</div>
<div style="left:673px;top:42.5px;font-size:13.6px;line-height:19px;height:19px;white-space:pre;color:#d3d6e4;">jumpr.c</div>
<svg style="left:738px;top:44px;" width="16" height="16" viewBox="0 0 16 16"><path d="M3.6 3.6 L12.4 12.4 M12.4 3.6 L3.6 12.4" stroke="#d3d6e4" stroke-width="1.2"/></svg>
<div style="left:774.5px;top:41.5px;font-size:14px;line-height:20px;height:20px;white-space:pre;color:#e8823a;font-weight:700;transform:scaleX(1.12);transform-origin:0 50%;">M</div>
<div style="left:793px;top:42.5px;font-size:13.6px;line-height:19px;height:19px;white-space:pre;color:#727b95;">Makefile</div>
<svg style="left:898.0px;top:47.5px;" width="10" height="10" viewBox="0 0 10 10"><rect x="0" y="0" width="9" height="1.2" fill="#c3c8d6"/><rect x="0" y="2.5" width="5.6" height="1.2" fill="#c3c8d6"/><rect x="0" y="5" width="9" height="1.2" fill="#c3c8d6"/><rect x="0" y="7.5" width="6.6" height="1.2" fill="#c3c8d6"/></svg>
<div style="left:913px;top:42.5px;font-size:13.6px;line-height:19px;height:19px;white-space:pre;color:#727b95;">a.txt</div>
<svg style="left:1099px;top:44px;" width="17" height="17" viewBox="0 0 17 17"><rect x="1.2" y="2.2" width="14" height="13" rx="2" fill="none" stroke="#b4bcd6" stroke-width="1.15"/><path d="M8.2 2.2 V15.2" stroke="#b4bcd6" stroke-width="1.15"/></svg>
<svg style="left:1125px;top:44px;" width="16" height="16" viewBox="0 0 16 16"><circle cx="3.8" cy="8.4" r="1.05" fill="#aab3d0"/><circle cx="8" cy="8.4" r="1.05" fill="#aab3d0"/><circle cx="12.2" cy="8.4" r="1.05" fill="#aab3d0"/></svg>
<div style="left:1156px;top:35px;width:119px;height:35px;background:#1e2333;"></div>
<div style="left:1156px;top:69px;width:119px;height:1px;background:#8a7440;"></div>
<div style="left:1172.2px;top:43.3px;font-size:13.2px;line-height:18px;height:18px;white-space:pre;color:#a57cc8;font-weight:700;">C</div>
<div style="left:1188px;top:42.5px;font-size:13.6px;line-height:19px;height:19px;white-space:pre;color:#d3d6e4;">huesos.h</div>
<svg style="left:1253px;top:44px;" width="16" height="16" viewBox="0 0 16 16"><path d="M3.6 3.6 L12.4 12.4 M12.4 3.6 L3.6 12.4" stroke="#6b7490" stroke-width="1.2"/></svg>
<svg style="left:1889px;top:44px;" width="16" height="16" viewBox="0 0 16 16"><circle cx="3.8" cy="8.4" r="1.05" fill="#aab3d0"/><circle cx="8" cy="8.4" r="1.05" fill="#aab3d0"/><circle cx="12.2" cy="8.4" r="1.05" fill="#aab3d0"/></svg>
<div style="left:408px;top:71.5px;font-size:13.6px;line-height:19px;height:19px;white-space:pre;color:#8a93b4;">games</div>
<svg style="left:449.5px;top:73.5px;" width="16" height="16" viewBox="0 0 16 16"><path d="M6 4.2 L9.8 8.3 L6 12.4" fill="none" stroke="#8a93b4" stroke-width="1.15"/></svg>
<div style="left:470.2px;top:72.3px;font-size:13.2px;line-height:18px;height:18px;white-space:pre;color:#5aa8c9;font-weight:700;">C</div>
<div style="left:487px;top:71.5px;font-size:13.6px;line-height:19px;height:19px;white-space:pre;color:#8a93b4;">jumpr.c</div>
<div style="left:1172px;top:71.5px;font-size:13.6px;line-height:19px;height:19px;white-space:pre;color:#8a93b4;">games</div>
<svg style="left:1213.5px;top:73.5px;" width="16" height="16" viewBox="0 0 16 16"><path d="M6 4.2 L9.8 8.3 L6 12.4" fill="none" stroke="#8a93b4" stroke-width="1.15"/></svg>
<div style="left:1234.2px;top:72.3px;font-size:13.2px;line-height:18px;height:18px;white-space:pre;color:#a57cc8;font-weight:700;">C</div>
<div style="left:1251px;top:71.5px;font-size:13.6px;line-height:19px;height:19px;white-space:pre;color:#8a93b4;">huesos.h</div>
<div style="left:462px;top:415px;width:600px;height:19px;background:#2d3650;"></div>
<div class="lnum" style="top:92px;left:395.5px;color:#454c60">1</div>
<div class="cl" style="top:92px;left:462px"><span style="color:#ffad66">#include</span> <span style="color:#d5ff80">&lt;huesos.h&gt;</span></div>
<div class="lnum" style="top:111px;left:395.5px;color:#454c60">2</div>
<div class="cl" style="top:111px;left:462px"></div>
<div class="lnum" style="top:130px;left:395.5px;color:#454c60">3</div>
<div class="cl" style="top:130px;left:462px"><span style="color:#c7a9ff">void</span> <span style="color:#ffd173">main</span><span style="color:#ffd700">(</span><span style="color:#ffd700">)</span> <span style="color:#ffd700">{</span></div>
<div class="lnum" style="top:149px;left:395.5px;color:#454c60">4</div>
<div class="cl" style="top:149px;left:462px">    <span style="color:#c7a9ff">int</span> x<span style="color:#a8a7a4">,</span> y<span style="color:#a8a7a4">;</span></div>
<i class="ig" style="left:462px;top:149px"></i>
<div class="lnum" style="top:168px;left:395.5px;color:#454c60">5</div>
<div class="cl" style="top:168px;left:462px"></div>
<i class="ig" style="left:462px;top:168px"></i>
<div class="lnum" style="top:187px;left:395.5px;color:#454c60">6</div>
<div class="cl" style="top:187px;left:462px">    <span style="color:#c7a9ff">char</span> key<span style="color:#a8a7a4">;</span></div>
<i class="ig" style="left:462px;top:187px"></i>
<div class="lnum" style="top:206px;left:395.5px;color:#454c60">7</div>
<div class="cl" style="top:206px;left:462px"></div>
<i class="ig" style="left:462px;top:206px"></i>
<div class="lnum" style="top:225px;left:395.5px;color:#454c60">8</div>
<div class="cl" style="top:225px;left:462px">    <span style="color:#ffd173">_vga_turn_13h</span><span style="color:#da70d6">(</span><span style="color:#da70d6">)</span><span style="color:#a8a7a4">;</span></div>
<i class="ig" style="left:462px;top:225px"></i>
<div class="lnum" style="top:244px;left:395.5px;color:#454c60">9</div>
<div class="cl" style="top:244px;left:462px"></div>
<i class="ig" style="left:462px;top:244px"></i>
<div class="lnum" style="top:263px;left:395.5px;color:#454c60">10</div>
<div class="cl" style="top:263px;left:462px">    <span style="color:#ffad66">for</span> <span style="color:#da70d6">(</span>x <span style="color:#f29e74">=</span> <span style="color:#c7a9ff">0</span><span style="color:#a8a7a4">;</span> x <span style="color:#f29e74">&lt;</span> <span style="color:#c7a9ff">320</span><span style="color:#a8a7a4">;</span> x<span style="color:#f29e74">++</span><span style="color:#da70d6">)</span> <span style="color:#da70d6">{</span></div>
<i class="ig" style="left:462px;top:263px"></i>
<div class="lnum" style="top:282px;left:395.5px;color:#454c60">11</div>
<div class="cl" style="top:282px;left:462px">        <span style="color:#ffad66">for</span> <span style="color:#179fff">(</span>y <span style="color:#f29e74">=</span> <span style="color:#c7a9ff">0</span><span style="color:#a8a7a4">;</span> y <span style="color:#f29e74">&lt;</span> <span style="color:#c7a9ff">200</span><span style="color:#a8a7a4">;</span> y<span style="color:#f29e74">++</span><span style="color:#179fff">)</span> <span style="color:#179fff">{</span></div>
<i class="ig" style="left:462px;top:282px"></i>
<i class="ig" style="left:496px;top:282px"></i>
<div class="lnum" style="top:301px;left:395.5px;color:#454c60">12</div>
<div class="cl" style="top:301px;left:462px">            <span style="color:#ffd173">_vga_putpixel_13h</span><span style="color:#ffd700">(</span>x<span style="color:#a8a7a4">,</span> y<span style="color:#a8a7a4">,</span> <span style="color:#c7a9ff">1</span><span style="color:#ffd700">)</span><span style="color:#a8a7a4">;</span></div>
<i class="ig" style="left:462px;top:301px"></i>
<i class="ig" style="left:496px;top:301px"></i>
<i class="ig" style="left:529px;top:301px"></i>
<div class="lnum" style="top:320px;left:395.5px;color:#454c60">13</div>
<div class="cl" style="top:320px;left:462px">        <span style="color:#179fff">}</span></div>
<i class="ig" style="left:462px;top:320px"></i>
<i class="ig" style="left:496px;top:320px"></i>
<div class="lnum" style="top:339px;left:395.5px;color:#454c60">14</div>
<div class="cl" style="top:339px;left:462px">    <span style="color:#da70d6">}</span></div>
<i class="ig" style="left:462px;top:339px"></i>
<div class="lnum" style="top:358px;left:395.5px;color:#454c60">15</div>
<div class="cl" style="top:358px;left:462px"></div>
<i class="ig" style="left:462px;top:358px"></i>
<div class="lnum" style="top:377px;left:395.5px;color:#454c60">16</div>
<div class="cl" style="top:377px;left:462px">    <span style="color:#ffad66">while</span> <span style="color:#da70d6">(</span><span style="color:#c7a9ff">1</span><span style="color:#da70d6">)</span> <span style="color:#da70d6">{</span></div>
<i class="ig" style="left:462px;top:377px"></i>
<div class="lnum" style="top:396px;left:395.5px;color:#454c60">17</div>
<div class="cl" style="top:396px;left:462px">        key <span style="color:#f29e74">=</span> <span style="color:#ffd173">_huesos_getch</span><span style="color:#179fff">(</span><span style="color:#179fff">)</span><span style="color:#a8a7a4">;</span></div>
<i class="ig" style="left:462px;top:396px"></i>
<i class="ig" style="left:496px;top:396px"></i>
<div class="lnum" style="top:415px;left:395.5px;color:#c9ccd6">18</div>
<div class="cl" style="top:415px;left:462px">        <span style="color:#ffd173">_huesos_print</span><span style="color:#179fff">(</span>key<span style="color:#a8a7a4">,</span> <span style="color:#c7a9ff">7</span><span style="color:#179fff">)</span><span style="color:#a8a7a4">;</span></div>
<i class="ig" style="left:462px;top:415px"></i>
<i class="ig" style="left:496px;top:415px"></i>
<div class="lnum" style="top:434px;left:395.5px;color:#454c60">19</div>
<div class="cl" style="top:434px;left:462px">    <span style="color:#da70d6">}</span></div>
<i class="ig" style="left:462px;top:434px"></i>
<div class="lnum" style="top:453px;left:395.5px;color:#454c60">20</div>
<div class="cl" style="top:453px;left:462px">    <span style="color:#ffd173">_huesos_return</span><span style="color:#da70d6">(</span><span style="color:#da70d6">)</span><span style="color:#a8a7a4">;</span></div>
<i class="ig" style="left:462px;top:453px"></i>
<div class="lnum" style="top:472px;left:395.5px;color:#454c60">21</div>
<div class="cl" style="top:472px;left:462px"><span style="color:#ffd700">}</span></div>
<div style="left:496px;top:396px;width:1px;height:38px;background:#4a526c;"></div>
<svg class="abs" style="left:1070px;top:92px;opacity:0.42" width="60" height="60" viewBox="0 0 60 60" shape-rendering="crispEdges"><rect x="0.0" y="0" width="8.0" height="2" fill="#ffad66"/><rect x="9.0" y="0" width="10.0" height="2" fill="#d5ff80"/><rect x="0.0" y="4" width="4.0" height="2" fill="#c7a9ff"/><rect x="5.0" y="4" width="4.0" height="2" fill="#ffd173"/><rect x="9.0" y="4" width="1.0" height="2" fill="#ffd700"/><rect x="10.0" y="4" width="1.0" height="2" fill="#ffd700"/><rect x="12.0" y="4" width="1.0" height="2" fill="#ffd700"/><rect x="4.0" y="6" width="3.0" height="2" fill="#c7a9ff"/><rect x="8.0" y="6" width="1.0" height="2" fill="#c6c5c0"/><rect x="9.0" y="6" width="1.0" height="2" fill="#a8a7a4"/><rect x="11.0" y="6" width="1.0" height="2" fill="#c6c5c0"/><rect x="12.0" y="6" width="1.0" height="2" fill="#a8a7a4"/><rect x="4.0" y="10" width="4.0" height="2" fill="#c7a9ff"/><rect x="9.0" y="10" width="3.0" height="2" fill="#c6c5c0"/><rect x="12.0" y="10" width="1.0" height="2" fill="#a8a7a4"/><rect x="4.0" y="14" width="13.0" height="2" fill="#ffd173"/><rect x="17.0" y="14" width="1.0" height="2" fill="#da70d6"/><rect x="18.0" y="14" width="1.0" height="2" fill="#da70d6"/><rect x="19.0" y="14" width="1.0" height="2" fill="#a8a7a4"/><rect x="4.0" y="18" width="3.0" height="2" fill="#ffad66"/><rect x="8.0" y="18" width="1.0" height="2" fill="#da70d6"/><rect x="9.0" y="18" width="1.0" height="2" fill="#c6c5c0"/><rect x="11.0" y="18" width="1.0" height="2" fill="#f29e74"/><rect x="13.0" y="18" width="1.0" height="2" fill="#c7a9ff"/><rect x="14.0" y="18" width="1.0" height="2" fill="#a8a7a4"/><rect x="16.0" y="18" width="1.0" height="2" fill="#c6c5c0"/><rect x="18.0" y="18" width="1.0" height="2" fill="#f29e74"/><rect x="20.0" y="18" width="3.0" height="2" fill="#c7a9ff"/><rect x="23.0" y="18" width="1.0" height="2" fill="#a8a7a4"/><rect x="25.0" y="18" width="1.0" height="2" fill="#c6c5c0"/><rect x="26.0" y="18" width="2.0" height="2" fill="#f29e74"/><rect x="28.0" y="18" width="1.0" height="2" fill="#da70d6"/><rect x="30.0" y="18" width="1.0" height="2" fill="#da70d6"/><rect x="8.0" y="20" width="3.0" height="2" fill="#ffad66"/><rect x="12.0" y="20" width="1.0" height="2" fill="#179fff"/><rect x="13.0" y="20" width="1.0" height="2" fill="#c6c5c0"/><rect x="15.0" y="20" width="1.0" height="2" fill="#f29e74"/><rect x="17.0" y="20" width="1.0" height="2" fill="#c7a9ff"/><rect x="18.0" y="20" width="1.0" height="2" fill="#a8a7a4"/><rect x="20.0" y="20" width="1.0" height="2" fill="#c6c5c0"/><rect x="22.0" y="20" width="1.0" height="2" fill="#f29e74"/><rect x="24.0" y="20" width="3.0" height="2" fill="#c7a9ff"/><rect x="27.0" y="20" width="1.0" height="2" fill="#a8a7a4"/><rect x="29.0" y="20" width="1.0" height="2" fill="#c6c5c0"/><rect x="30.0" y="20" width="2.0" height="2" fill="#f29e74"/><rect x="32.0" y="20" width="1.0" height="2" fill="#179fff"/><rect x="34.0" y="20" width="1.0" height="2" fill="#179fff"/><rect x="12.0" y="22" width="17.0" height="2" fill="#ffd173"/><rect x="29.0" y="22" width="1.0" height="2" fill="#ffd700"/><rect x="30.0" y="22" width="1.0" height="2" fill="#c6c5c0"/><rect x="31.0" y="22" width="1.0" height="2" fill="#a8a7a4"/><rect x="33.0" y="22" width="1.0" height="2" fill="#c6c5c0"/><rect x="34.0" y="22" width="1.0" height="2" fill="#a8a7a4"/><rect x="36.0" y="22" width="1.0" height="2" fill="#c7a9ff"/><rect x="37.0" y="22" width="1.0" height="2" fill="#ffd700"/><rect x="38.0" y="22" width="1.0" height="2" fill="#a8a7a4"/><rect x="8.0" y="24" width="1.0" height="2" fill="#179fff"/><rect x="4.0" y="26" width="1.0" height="2" fill="#da70d6"/><rect x="4.0" y="30" width="5.0" height="2" fill="#ffad66"/><rect x="10.0" y="30" width="1.0" height="2" fill="#da70d6"/><rect x="11.0" y="30" width="1.0" height="2" fill="#c7a9ff"/><rect x="12.0" y="30" width="1.0" height="2" fill="#da70d6"/><rect x="14.0" y="30" width="1.0" height="2" fill="#da70d6"/><rect x="8.0" y="32" width="3.0" height="2" fill="#c6c5c0"/><rect x="12.0" y="32" width="1.0" height="2" fill="#f29e74"/><rect x="14.0" y="32" width="13.0" height="2" fill="#ffd173"/><rect x="27.0" y="32" width="1.0" height="2" fill="#179fff"/><rect x="28.0" y="32" width="1.0" height="2" fill="#179fff"/><rect x="29.0" y="32" width="1.0" height="2" fill="#a8a7a4"/><rect x="8.0" y="34" width="13.0" height="2" fill="#ffd173"/><rect x="21.0" y="34" width="1.0" height="2" fill="#179fff"/><rect x="22.0" y="34" width="3.0" height="2" fill="#c6c5c0"/><rect x="25.0" y="34" width="1.0" height="2" fill="#a8a7a4"/><rect x="27.0" y="34" width="1.0" height="2" fill="#c7a9ff"/><rect x="28.0" y="34" width="1.0" height="2" fill="#179fff"/><rect x="29.0" y="34" width="1.0" height="2" fill="#a8a7a4"/><rect x="4.0" y="36" width="1.0" height="2" fill="#da70d6"/><rect x="4.0" y="38" width="14.0" height="2" fill="#ffd173"/><rect x="18.0" y="38" width="1.0" height="2" fill="#da70d6"/><rect x="19.0" y="38" width="1.0" height="2" fill="#da70d6"/><rect x="20.0" y="38" width="1.0" height="2" fill="#a8a7a4"/><rect x="0.0" y="40" width="1.0" height="2" fill="#ffd700"/></svg>
<div style="left:1142px;top:92px;width:1px;height:701px;background:#283046;"></div>
<div style="left:1142px;top:92px;width:14px;height:453px;background:#3e485e;"></div>
<div style="left:1142px;top:92px;width:1px;height:453px;background:#465068;"></div>
<div style="left:1142px;top:300px;width:14px;height:2px;background:#9a8250;"></div>
<div style="left:1158px;top:92px;width:668px;height:701px;overflow:hidden">
<div class="lnum" style="top:0px;left:1.5px;color:#454c60">1</div>
<div class="cl" style="top:0px;left:68px"><span style="color:#ffad66">#ifndef</span> <span style="color:#ffd173">HUESOS_H</span></div>
<div class="lnum" style="top:19px;left:1.5px;color:#454c60">2</div>
<div class="cl" style="top:19px;left:68px"><span style="color:#ffad66">#define</span> <span style="color:#ffd173">HUESOS_H</span></div>
<div class="lnum" style="top:38px;left:1.5px;color:#454c60">3</div>
<div class="cl" style="top:38px;left:68px"></div>
<div class="lnum" style="top:57px;left:1.5px;color:#454c60">4</div>
<div class="cl" style="top:57px;left:68px"><span style="color:#ffad66">#include</span> <span style="color:#d5ff80">&lt;stdint.h&gt;</span></div>
<div class="lnum" style="top:76px;left:1.5px;color:#454c60">5</div>
<div class="cl" style="top:76px;left:68px"></div>
<div class="lnum" style="top:95px;left:1.5px;color:#454c60">6</div>
<div class="cl" style="top:95px;left:68px"><span style="color:#ffad66">#define</span> <span style="color:#ffd173">MK_FP</span><span style="color:#ffd700">(</span>seg<span style="color:#a8a7a4">,</span> off<span style="color:#ffd700">)</span> <span style="color:#ffd700">(</span><span style="color:#da70d6">(</span><span style="color:#c7a9ff">void</span> <span style="color:#c7a9ff">far</span> <span style="color:#f29e74">*</span><span style="color:#da70d6">)</span><span style="color:#da70d6">(</span><span style="color:#179fff">(</span><span style="color:#ffd700">(</span><span style="color:#c7a9ff">unsigned</span> <span style="color:#c7a9ff">long</span><span style="color:#ffd700">)</span><span style="color:#ffd700">(</span>seg<span style="color:#ffd700">)</span> <span style="color:#f29e74">&lt;&lt;</span> <span style="color:#c7a9ff">16</span><span style="color:#179fff">)</span> <span style="color:#f29e74">|</span> <span style="color:#179fff">(</span><span style="color:#c7a9ff">unsigned</span><span style="color:#179fff">)</span><span style="color:#179fff">(</span>off<span style="color:#179fff">)</span><span style="color:#da70d6">)</span><span style="color:#ffd700">)</span></div>
<div class="lnum" style="top:114px;left:1.5px;color:#454c60">7</div>
<div class="cl" style="top:114px;left:68px"></div>
<div class="lnum" style="top:133px;left:1.5px;color:#454c60">8</div>
<div class="cl" style="top:133px;left:68px"><span style="color:#c7a9ff">static</span> <span style="color:#c7a9ff">void</span> <span style="color:#ffd173">_vga_putpixel_13h</span><span style="color:#ffd700">(</span><span style="color:#c7a9ff">int</span> x<span style="color:#a8a7a4">,</span> <span style="color:#c7a9ff">int</span> y<span style="color:#a8a7a4">,</span> <span style="color:#c7a9ff">uint8_t</span> color<span style="color:#ffd700">)</span></div>
<div class="lnum" style="top:152px;left:1.5px;color:#454c60">9</div>
<div class="cl" style="top:152px;left:68px"><span style="color:#ffd700">{</span></div>
<div class="lnum" style="top:171px;left:1.5px;color:#454c60">10</div>
<div class="cl" style="top:171px;left:68px">    <span style="color:#c7a9ff">uint8_t</span> <span style="color:#c7a9ff">far</span> <span style="color:#f29e74">*</span>vga <span style="color:#f29e74">=</span> <span style="color:#da70d6">(</span><span style="color:#c7a9ff">uint8_t</span> <span style="color:#c7a9ff">far</span><span style="color:#f29e74">*</span><span style="color:#da70d6">)</span><span style="color:#ffd173">MK_FP</span><span style="color:#da70d6">(</span><span style="color:#c7a9ff">0xA000</span><span style="color:#a8a7a4">,</span> <span style="color:#c7a9ff">0</span><span style="color:#da70d6">)</span><span style="color:#a8a7a4">;</span></div>
<i class="ig" style="left:68px;top:171px"></i>
<div class="lnum" style="top:190px;left:1.5px;color:#454c60">11</div>
<div class="cl" style="top:190px;left:68px">    <span style="color:#5ccfe6">vga</span><span style="color:#da70d6">[</span>y <span style="color:#f29e74">*</span> <span style="color:#c7a9ff">320</span> <span style="color:#f29e74">+</span> x<span style="color:#da70d6">]</span> <span style="color:#f29e74">=</span> color<span style="color:#a8a7a4">;</span></div>
<i class="ig" style="left:68px;top:190px"></i>
<div class="lnum" style="top:209px;left:1.5px;color:#454c60">12</div>
<div class="cl" style="top:209px;left:68px"><span style="color:#ffd700">}</span></div>
<div class="lnum" style="top:228px;left:1.5px;color:#454c60">13</div>
<div class="cl" style="top:228px;left:68px"></div>
<div class="lnum" style="top:247px;left:1.5px;color:#454c60">14</div>
<div class="cl" style="top:247px;left:68px"><span style="color:#c7a9ff">static</span> <span style="color:#c7a9ff">inline</span> <span style="color:#c7a9ff">void</span> <span style="color:#ffd173">_vga_turn_13h</span><span style="color:#ffd700">(</span><span style="color:#ffd700">)</span> <span style="color:#ffd700">{</span></div>
<div class="lnum" style="top:266px;left:1.5px;color:#454c60">15</div>
<div class="cl" style="top:266px;left:68px">    __asm <span style="color:#da70d6">{</span></div>
<i class="ig" style="left:68px;top:266px"></i>
<div class="lnum" style="top:285px;left:1.5px;color:#454c60">16</div>
<div class="cl" style="top:285px;left:68px">        push ax</div>
<i class="ig" style="left:68px;top:285px"></i>
<i class="ig" style="left:102px;top:285px"></i>
<div class="lnum" style="top:304px;left:1.5px;color:#454c60">17</div>
<div class="cl" style="top:304px;left:68px">        mov ax<span style="color:#a8a7a4">,</span> <span style="color:#c7a9ff">0x13</span></div>
<i class="ig" style="left:68px;top:304px"></i>
<i class="ig" style="left:102px;top:304px"></i>
<div class="lnum" style="top:323px;left:1.5px;color:#454c60">18</div>
<div class="cl" style="top:323px;left:68px">        <span style="color:#c7a9ff">int</span> <span style="color:#c7a9ff">0x10</span></div>
<i class="ig" style="left:68px;top:323px"></i>
<i class="ig" style="left:102px;top:323px"></i>
<div class="lnum" style="top:342px;left:1.5px;color:#454c60">19</div>
<div class="cl" style="top:342px;left:68px">        pop ax</div>
<i class="ig" style="left:68px;top:342px"></i>
<i class="ig" style="left:102px;top:342px"></i>
<div class="lnum" style="top:361px;left:1.5px;color:#454c60">20</div>
<div class="cl" style="top:361px;left:68px">    <span style="color:#da70d6">}</span></div>
<i class="ig" style="left:68px;top:361px"></i>
<div class="lnum" style="top:380px;left:1.5px;color:#454c60">21</div>
<div class="cl" style="top:380px;left:68px"><span style="color:#ffd700">}</span></div>
<div class="lnum" style="top:399px;left:1.5px;color:#454c60">22</div>
<div class="cl" style="top:399px;left:68px"></div>
<div class="lnum" style="top:418px;left:1.5px;color:#454c60">23</div>
<div class="cl" style="top:418px;left:68px"><span style="color:#c7a9ff">static</span> <span style="color:#c7a9ff">inline</span> <span style="color:#c7a9ff">void</span> <span style="color:#ffd173">_vga_turn_12h</span><span style="color:#ffd700">(</span><span style="color:#ffd700">)</span> <span style="color:#ffd700">{</span></div>
<div class="lnum" style="top:437px;left:1.5px;color:#454c60">24</div>
<div class="cl" style="top:437px;left:68px">    __asm <span style="color:#da70d6">{</span></div>
<i class="ig" style="left:68px;top:437px"></i>
<div class="lnum" style="top:456px;left:1.5px;color:#454c60">25</div>
<div class="cl" style="top:456px;left:68px">        push ax</div>
<i class="ig" style="left:68px;top:456px"></i>
<i class="ig" style="left:102px;top:456px"></i>
<div class="lnum" style="top:475px;left:1.5px;color:#454c60">26</div>
<div class="cl" style="top:475px;left:68px">        mov ax<span style="color:#a8a7a4">,</span> <span style="color:#c7a9ff">0x12</span></div>
<i class="ig" style="left:68px;top:475px"></i>
<i class="ig" style="left:102px;top:475px"></i>
<div class="lnum" style="top:494px;left:1.5px;color:#454c60">27</div>
<div class="cl" style="top:494px;left:68px">        <span style="color:#c7a9ff">int</span> <span style="color:#c7a9ff">0x10</span></div>
<i class="ig" style="left:68px;top:494px"></i>
<i class="ig" style="left:102px;top:494px"></i>
<div class="lnum" style="top:513px;left:1.5px;color:#454c60">28</div>
<div class="cl" style="top:513px;left:68px">        pop ax</div>
<i class="ig" style="left:68px;top:513px"></i>
<i class="ig" style="left:102px;top:513px"></i>
<div class="lnum" style="top:532px;left:1.5px;color:#454c60">29</div>
<div class="cl" style="top:532px;left:68px">    <span style="color:#da70d6">}</span></div>
<i class="ig" style="left:68px;top:532px"></i>
<div class="lnum" style="top:551px;left:1.5px;color:#454c60">30</div>
<div class="cl" style="top:551px;left:68px"><span style="color:#ffd700">}</span></div>
<div class="lnum" style="top:570px;left:1.5px;color:#454c60">31</div>
<div class="cl" style="top:570px;left:68px"></div>
<div class="lnum" style="top:589px;left:1.5px;color:#454c60">32</div>
<div class="cl" style="top:589px;left:68px"><span style="color:#c7a9ff">static</span> <span style="color:#c7a9ff">inline</span> <span style="color:#c7a9ff">void</span> <span style="color:#ffd173">_huesos_print</span><span style="color:#ffd700">(</span><span style="color:#c7a9ff">const</span> <span style="color:#c7a9ff">char</span> <span style="color:#f29e74">*</span>text<span style="color:#a8a7a4">,</span> <span style="color:#c7a9ff">uint8_t</span> color<span style="color:#ffd700">)</span> <span style="color:#ffd700">{</span></div>
<div class="lnum" style="top:608px;left:1.5px;color:#454c60">33</div>
<div class="cl" style="top:608px;left:68px">    __asm <span style="color:#da70d6">{</span></div>
<i class="ig" style="left:68px;top:608px"></i>
<div class="lnum" style="top:627px;left:1.5px;color:#454c60">34</div>
<div class="cl" style="top:627px;left:68px">        push si</div>
<i class="ig" style="left:68px;top:627px"></i>
<i class="ig" style="left:102px;top:627px"></i>
<div class="lnum" style="top:646px;left:1.5px;color:#454c60">35</div>
<div class="cl" style="top:646px;left:68px">        push bx</div>
<i class="ig" style="left:68px;top:646px"></i>
<i class="ig" style="left:102px;top:646px"></i>
<div class="lnum" style="top:665px;left:1.5px;color:#454c60">36</div>
<div class="cl" style="top:665px;left:68px">        mov si<span style="color:#a8a7a4">,</span> word ptr text</div>
<i class="ig" style="left:68px;top:665px"></i>
<i class="ig" style="left:102px;top:665px"></i>
<div class="lnum" style="top:684px;left:1.5px;color:#454c60">37</div>
<div class="cl" style="top:684px;left:68px">        mov bl<span style="color:#a8a7a4">,</span> color</div>
<i class="ig" style="left:68px;top:684px"></i>
<i class="ig" style="left:102px;top:684px"></i>
</div>
<div style="left:1826px;top:92px;width:7px;height:701px;background:#1e2333;"></div>
<div style="left:1820px;top:92px;width:6px;height:701px;background:linear-gradient(90deg,rgba(0,0,0,0),rgba(0,0,0,.22))"></div>
<div style="left:1833px;top:180px;width:73px;height:4px;background:#23456b;"></div>
<svg class="abs" style="left:1834px;top:92px;opacity:0.42" width="71" height="140" viewBox="0 0 71 140" shape-rendering="crispEdges"><rect x="0.0" y="0" width="7.0" height="2" fill="#ffad66"/><rect x="8.0" y="0" width="8.0" height="2" fill="#ffd173"/><rect x="0.0" y="2" width="7.0" height="2" fill="#ffad66"/><rect x="8.0" y="2" width="8.0" height="2" fill="#ffd173"/><rect x="0.0" y="6" width="8.0" height="2" fill="#ffad66"/><rect x="9.0" y="6" width="10.0" height="2" fill="#d5ff80"/><rect x="0.0" y="10" width="7.0" height="2" fill="#ffad66"/><rect x="8.0" y="10" width="5.0" height="2" fill="#ffd173"/><rect x="13.0" y="10" width="1.0" height="2" fill="#ffd700"/><rect x="14.0" y="10" width="3.0" height="2" fill="#c6c5c0"/><rect x="17.0" y="10" width="1.0" height="2" fill="#a8a7a4"/><rect x="19.0" y="10" width="3.0" height="2" fill="#c6c5c0"/><rect x="22.0" y="10" width="1.0" height="2" fill="#ffd700"/><rect x="24.0" y="10" width="1.0" height="2" fill="#ffd700"/><rect x="25.0" y="10" width="1.0" height="2" fill="#da70d6"/><rect x="26.0" y="10" width="4.0" height="2" fill="#c7a9ff"/><rect x="31.0" y="10" width="3.0" height="2" fill="#c7a9ff"/><rect x="35.0" y="10" width="1.0" height="2" fill="#f29e74"/><rect x="36.0" y="10" width="1.0" height="2" fill="#da70d6"/><rect x="37.0" y="10" width="1.0" height="2" fill="#da70d6"/><rect x="38.0" y="10" width="1.0" height="2" fill="#179fff"/><rect x="39.0" y="10" width="1.0" height="2" fill="#ffd700"/><rect x="40.0" y="10" width="8.0" height="2" fill="#c7a9ff"/><rect x="49.0" y="10" width="4.0" height="2" fill="#c7a9ff"/><rect x="53.0" y="10" width="1.0" height="2" fill="#ffd700"/><rect x="54.0" y="10" width="1.0" height="2" fill="#ffd700"/><rect x="55.0" y="10" width="3.0" height="2" fill="#c6c5c0"/><rect x="58.0" y="10" width="1.0" height="2" fill="#ffd700"/><rect x="60.0" y="10" width="2.0" height="2" fill="#f29e74"/><rect x="63.0" y="10" width="2.0" height="2" fill="#c7a9ff"/><rect x="65.0" y="10" width="1.0" height="2" fill="#179fff"/><rect x="67.0" y="10" width="1.0" height="2" fill="#f29e74"/><rect x="69.0" y="10" width="1.0" height="2" fill="#179fff"/><rect x="70.0" y="10" width="1.0" height="2" fill="#c7a9ff"/><rect x="0.0" y="14" width="6.0" height="2" fill="#c7a9ff"/><rect x="7.0" y="14" width="4.0" height="2" fill="#c7a9ff"/><rect x="12.0" y="14" width="17.0" height="2" fill="#ffd173"/><rect x="29.0" y="14" width="1.0" height="2" fill="#ffd700"/><rect x="30.0" y="14" width="3.0" height="2" fill="#c7a9ff"/><rect x="34.0" y="14" width="1.0" height="2" fill="#c6c5c0"/><rect x="35.0" y="14" width="1.0" height="2" fill="#a8a7a4"/><rect x="37.0" y="14" width="3.0" height="2" fill="#c7a9ff"/><rect x="41.0" y="14" width="1.0" height="2" fill="#c6c5c0"/><rect x="42.0" y="14" width="1.0" height="2" fill="#a8a7a4"/><rect x="44.0" y="14" width="7.0" height="2" fill="#c7a9ff"/><rect x="52.0" y="14" width="5.0" height="2" fill="#c6c5c0"/><rect x="57.0" y="14" width="1.0" height="2" fill="#ffd700"/><rect x="0.0" y="16" width="1.0" height="2" fill="#ffd700"/><rect x="4.0" y="18" width="7.0" height="2" fill="#c7a9ff"/><rect x="12.0" y="18" width="3.0" height="2" fill="#c7a9ff"/><rect x="16.0" y="18" width="1.0" height="2" fill="#f29e74"/><rect x="17.0" y="18" width="3.0" height="2" fill="#c6c5c0"/><rect x="21.0" y="18" width="1.0" height="2" fill="#f29e74"/><rect x="23.0" y="18" width="1.0" height="2" fill="#da70d6"/><rect x="24.0" y="18" width="7.0" height="2" fill="#c7a9ff"/><rect x="32.0" y="18" width="3.0" height="2" fill="#c7a9ff"/><rect x="35.0" y="18" width="1.0" height="2" fill="#f29e74"/><rect x="36.0" y="18" width="1.0" height="2" fill="#da70d6"/><rect x="37.0" y="18" width="5.0" height="2" fill="#ffd173"/><rect x="42.0" y="18" width="1.0" height="2" fill="#da70d6"/><rect x="43.0" y="18" width="6.0" height="2" fill="#c7a9ff"/><rect x="49.0" y="18" width="1.0" height="2" fill="#a8a7a4"/><rect x="51.0" y="18" width="1.0" height="2" fill="#c7a9ff"/><rect x="52.0" y="18" width="1.0" height="2" fill="#da70d6"/><rect x="53.0" y="18" width="1.0" height="2" fill="#a8a7a4"/><rect x="4.0" y="20" width="3.0" height="2" fill="#5ccfe6"/><rect x="7.0" y="20" width="1.0" height="2" fill="#da70d6"/><rect x="8.0" y="20" width="1.0" height="2" fill="#c6c5c0"/><rect x="10.0" y="20" width="1.0" height="2" fill="#f29e74"/><rect x="12.0" y="20" width="3.0" height="2" fill="#c7a9ff"/><rect x="16.0" y="20" width="1.0" height="2" fill="#f29e74"/><rect x="18.0" y="20" width="1.0" height="2" fill="#c6c5c0"/><rect x="19.0" y="20" width="1.0" height="2" fill="#da70d6"/><rect x="21.0" y="20" width="1.0" height="2" fill="#f29e74"/><rect x="23.0" y="20" width="5.0" height="2" fill="#c6c5c0"/><rect x="28.0" y="20" width="1.0" height="2" fill="#a8a7a4"/><rect x="0.0" y="22" width="1.0" height="2" fill="#ffd700"/><rect x="0.0" y="26" width="6.0" height="2" fill="#c7a9ff"/><rect x="7.0" y="26" width="6.0" height="2" fill="#c7a9ff"/><rect x="14.0" y="26" width="4.0" height="2" fill="#c7a9ff"/><rect x="19.0" y="26" width="13.0" height="2" fill="#ffd173"/><rect x="32.0" y="26" width="1.0" height="2" fill="#ffd700"/><rect x="33.0" y="26" width="1.0" height="2" fill="#ffd700"/><rect x="35.0" y="26" width="1.0" height="2" fill="#ffd700"/><rect x="4.0" y="28" width="5.0" height="2" fill="#c6c5c0"/><rect x="10.0" y="28" width="1.0" height="2" fill="#da70d6"/><rect x="8.0" y="30" width="4.0" height="2" fill="#c6c5c0"/><rect x="13.0" y="30" width="2.0" height="2" fill="#c6c5c0"/><rect x="8.0" y="32" width="3.0" height="2" fill="#c6c5c0"/><rect x="12.0" y="32" width="2.0" height="2" fill="#c6c5c0"/><rect x="14.0" y="32" width="1.0" height="2" fill="#a8a7a4"/><rect x="16.0" y="32" width="4.0" height="2" fill="#c7a9ff"/><rect x="8.0" y="34" width="3.0" height="2" fill="#c7a9ff"/><rect x="12.0" y="34" width="4.0" height="2" fill="#c7a9ff"/><rect x="8.0" y="36" width="3.0" height="2" fill="#c6c5c0"/><rect x="12.0" y="36" width="2.0" height="2" fill="#c6c5c0"/><rect x="4.0" y="38" width="1.0" height="2" fill="#da70d6"/><rect x="0.0" y="40" width="1.0" height="2" fill="#ffd700"/><rect x="0.0" y="44" width="6.0" height="2" fill="#c7a9ff"/><rect x="7.0" y="44" width="6.0" height="2" fill="#c7a9ff"/><rect x="14.0" y="44" width="4.0" height="2" fill="#c7a9ff"/><rect x="19.0" y="44" width="13.0" height="2" fill="#ffd173"/><rect x="32.0" y="44" width="1.0" height="2" fill="#ffd700"/><rect x="33.0" y="44" width="1.0" height="2" fill="#ffd700"/><rect x="35.0" y="44" width="1.0" height="2" fill="#ffd700"/><rect x="4.0" y="46" width="5.0" height="2" fill="#c6c5c0"/><rect x="10.0" y="46" width="1.0" height="2" fill="#da70d6"/><rect x="8.0" y="48" width="4.0" height="2" fill="#c6c5c0"/><rect x="13.0" y="48" width="2.0" height="2" fill="#c6c5c0"/><rect x="8.0" y="50" width="3.0" height="2" fill="#c6c5c0"/><rect x="12.0" y="50" width="2.0" height="2" fill="#c6c5c0"/><rect x="14.0" y="50" width="1.0" height="2" fill="#a8a7a4"/><rect x="16.0" y="50" width="4.0" height="2" fill="#c7a9ff"/><rect x="8.0" y="52" width="3.0" height="2" fill="#c7a9ff"/><rect x="12.0" y="52" width="4.0" height="2" fill="#c7a9ff"/><rect x="8.0" y="54" width="3.0" height="2" fill="#c6c5c0"/><rect x="12.0" y="54" width="2.0" height="2" fill="#c6c5c0"/><rect x="4.0" y="56" width="1.0" height="2" fill="#da70d6"/><rect x="0.0" y="58" width="1.0" height="2" fill="#ffd700"/><rect x="0.0" y="62" width="6.0" height="2" fill="#c7a9ff"/><rect x="7.0" y="62" width="6.0" height="2" fill="#c7a9ff"/><rect x="14.0" y="62" width="4.0" height="2" fill="#c7a9ff"/><rect x="19.0" y="62" width="13.0" height="2" fill="#ffd173"/><rect x="32.0" y="62" width="1.0" height="2" fill="#ffd700"/><rect x="33.0" y="62" width="5.0" height="2" fill="#c7a9ff"/><rect x="39.0" y="62" width="4.0" height="2" fill="#c7a9ff"/><rect x="44.0" y="62" width="1.0" height="2" fill="#f29e74"/><rect x="45.0" y="62" width="4.0" height="2" fill="#c6c5c0"/><rect x="49.0" y="62" width="1.0" height="2" fill="#a8a7a4"/><rect x="51.0" y="62" width="7.0" height="2" fill="#c7a9ff"/><rect x="59.0" y="62" width="5.0" height="2" fill="#c6c5c0"/><rect x="64.0" y="62" width="1.0" height="2" fill="#ffd700"/><rect x="66.0" y="62" width="1.0" height="2" fill="#ffd700"/><rect x="4.0" y="64" width="5.0" height="2" fill="#c6c5c0"/><rect x="10.0" y="64" width="1.0" height="2" fill="#da70d6"/><rect x="8.0" y="66" width="4.0" height="2" fill="#c6c5c0"/><rect x="13.0" y="66" width="2.0" height="2" fill="#c6c5c0"/><rect x="8.0" y="68" width="4.0" height="2" fill="#c6c5c0"/><rect x="13.0" y="68" width="2.0" height="2" fill="#c6c5c0"/><rect x="8.0" y="70" width="3.0" height="2" fill="#c6c5c0"/><rect x="12.0" y="70" width="2.0" height="2" fill="#c6c5c0"/><rect x="14.0" y="70" width="1.0" height="2" fill="#a8a7a4"/><rect x="16.0" y="70" width="4.0" height="2" fill="#c6c5c0"/><rect x="21.0" y="70" width="3.0" height="2" fill="#c6c5c0"/><rect x="25.0" y="70" width="4.0" height="2" fill="#c6c5c0"/><rect x="8.0" y="72" width="3.0" height="2" fill="#c6c5c0"/><rect x="12.0" y="72" width="2.0" height="2" fill="#c6c5c0"/><rect x="14.0" y="72" width="1.0" height="2" fill="#a8a7a4"/><rect x="16.0" y="72" width="5.0" height="2" fill="#c6c5c0"/><rect x="8.0" y="74" width="3.0" height="2" fill="#c7a9ff"/><rect x="12.0" y="74" width="4.0" height="2" fill="#c7a9ff"/><rect x="8.0" y="76" width="3.0" height="2" fill="#c6c5c0"/><rect x="12.0" y="76" width="2.0" height="2" fill="#c6c5c0"/><rect x="8.0" y="78" width="3.0" height="2" fill="#c6c5c0"/><rect x="12.0" y="78" width="2.0" height="2" fill="#c6c5c0"/><rect x="4.0" y="80" width="1.0" height="2" fill="#da70d6"/><rect x="0.0" y="82" width="1.0" height="2" fill="#ffd700"/><rect x="0.0" y="86" width="6.0" height="2" fill="#c7a9ff"/><rect x="7.0" y="86" width="6.0" height="2" fill="#c7a9ff"/><rect x="14.0" y="86" width="4.0" height="2" fill="#c7a9ff"/><rect x="19.0" y="86" width="14.0" height="2" fill="#ffd173"/><rect x="33.0" y="86" width="1.0" height="2" fill="#ffd700"/><rect x="34.0" y="86" width="1.0" height="2" fill="#ffd700"/><rect x="36.0" y="86" width="1.0" height="2" fill="#ffd700"/><rect x="4.0" y="88" width="5.0" height="2" fill="#c6c5c0"/><rect x="10.0" y="88" width="1.0" height="2" fill="#da70d6"/><rect x="8.0" y="90" width="3.0" height="2" fill="#c7a9ff"/><rect x="12.0" y="90" width="4.0" height="2" fill="#c7a9ff"/><rect x="4.0" y="92" width="1.0" height="2" fill="#da70d6"/><rect x="0.0" y="94" width="1.0" height="2" fill="#ffd700"/><rect x="0.0" y="98" width="6.0" height="2" fill="#c7a9ff"/><rect x="7.0" y="98" width="6.0" height="2" fill="#c7a9ff"/><rect x="14.0" y="98" width="4.0" height="2" fill="#c7a9ff"/><rect x="19.0" y="98" width="13.0" height="2" fill="#ffd173"/><rect x="32.0" y="98" width="1.0" height="2" fill="#ffd700"/><rect x="33.0" y="98" width="1.0" height="2" fill="#ffd700"/><rect x="35.0" y="98" width="1.0" height="2" fill="#ffd700"/><rect x="4.0" y="100" width="4.0" height="2" fill="#c7a9ff"/><rect x="9.0" y="100" width="6.0" height="2" fill="#c6c5c0"/><rect x="15.0" y="100" width="1.0" height="2" fill="#a8a7a4"/><rect x="4.0" y="102" width="5.0" height="2" fill="#c6c5c0"/><rect x="10.0" y="102" width="1.0" height="2" fill="#da70d6"/><rect x="8.0" y="104" width="4.0" height="2" fill="#c6c5c0"/><rect x="13.0" y="104" width="2.0" height="2" fill="#c6c5c0"/><rect x="8.0" y="106" width="3.0" height="2" fill="#c6c5c0"/><rect x="12.0" y="106" width="2.0" height="2" fill="#c6c5c0"/><rect x="14.0" y="106" width="1.0" height="2" fill="#a8a7a4"/><rect x="16.0" y="106" width="4.0" height="2" fill="#c7a9ff"/><rect x="8.0" y="108" width="3.0" height="2" fill="#c7a9ff"/><rect x="12.0" y="108" width="4.0" height="2" fill="#c7a9ff"/><rect x="8.0" y="110" width="3.0" height="2" fill="#c6c5c0"/><rect x="12.0" y="110" width="6.0" height="2" fill="#c6c5c0"/><rect x="18.0" y="110" width="1.0" height="2" fill="#a8a7a4"/><rect x="20.0" y="110" width="2.0" height="2" fill="#c6c5c0"/><rect x="8.0" y="112" width="3.0" height="2" fill="#c6c5c0"/><rect x="12.0" y="112" width="2.0" height="2" fill="#c6c5c0"/><rect x="4.0" y="114" width="1.0" height="2" fill="#da70d6"/><rect x="4.0" y="116" width="6.0" height="2" fill="#ffad66"/><rect x="11.0" y="116" width="6.0" height="2" fill="#c6c5c0"/><rect x="17.0" y="116" width="1.0" height="2" fill="#a8a7a4"/><rect x="0.0" y="118" width="1.0" height="2" fill="#ffd700"/><rect x="0.0" y="126" width="6.0" height="2" fill="#ffad66"/><rect x="7.0" y="126" width="1.0" height="2" fill="#f29e74"/><rect x="8.0" y="126" width="1.0" height="2" fill="#f29e74"/><rect x="10.0" y="126" width="8.0" height="2" fill="#c6c5c0"/></svg>
<div style="left:1906px;top:92px;width:14px;height:701px;background:#1e2333;"></div>
<div style="left:1906px;top:92px;width:1px;height:701px;background:#293045;"></div>
<div style="left:1906px;top:396px;width:14px;height:2px;background:#9a8250;"></div>
<div style="left:412.5px;top:803.5px;font-size:11px;line-height:15px;height:15px;white-space:pre;color:#7a83a0;letter-spacing:-0.3px;">PROBLEMS</div>
<div style="left:492px;top:803.5px;font-size:11px;line-height:15px;height:15px;white-space:pre;color:#7a83a0;letter-spacing:-0.3px;">OUTPUT</div>
<div style="left:556px;top:803.5px;font-size:11px;line-height:15px;height:15px;white-space:pre;color:#7a83a0;letter-spacing:-0.3px;">DEBUG CONSOLE</div>
<div style="left:666px;top:803.5px;font-size:11px;line-height:15px;height:15px;white-space:pre;color:#d3d6e4;letter-spacing:-0.3px;">TERMINAL</div>
<div style="left:744px;top:803.5px;font-size:11px;line-height:15px;height:15px;white-space:pre;color:#7a83a0;letter-spacing:-0.3px;">PORTS</div>
<div style="left:666px;top:826px;width:58px;height:1px;background:#ffcc66;"></div>
<svg style="left:1784px;top:803px;" width="16" height="16" viewBox="0 0 16 16"><path d="M8 2.2 V13.8 M2.2 8 H13.8" stroke="#b7bed4" stroke-width="1.1"/></svg>
<svg style="left:1802px;top:805px;" width="12" height="12" viewBox="0 0 12 12"><path d="M2.4 4.4 L6 8 L9.6 4.4" fill="none" stroke="#b7bed4" stroke-width="1.1"/></svg>
<svg style="left:1824px;top:803px;" width="16" height="16" viewBox="0 0 16 16"><circle cx="3.8" cy="8.4" r="1.05" fill="#b7bed4"/><circle cx="8" cy="8.4" r="1.05" fill="#b7bed4"/><circle cx="12.2" cy="8.4" r="1.05" fill="#b7bed4"/></svg>
<div style="left:1851px;top:803px;width:1px;height:16px;background:#4a526a;"></div>
<svg style="left:1863px;top:803px;" width="16" height="16" viewBox="0 0 16 16"><path d="M2.4 5.8 V3.6 a1.2 1.2 0 0 1 1.2 -1.2 H5.8 M10.2 2.4 H12.4 a1.2 1.2 0 0 1 1.2 1.2 V5.8 M13.6 10.2 V12.4 a1.2 1.2 0 0 1 -1.2 1.2 H10.2 M5.8 13.6 H3.6 a1.2 1.2 0 0 1 -1.2 -1.2 V10.2" fill="none" stroke="#b7bed4" stroke-width="1.25"/></svg>
<svg style="left:1889px;top:803px;" width="16" height="16" viewBox="0 0 16 16"><path d="M3.6 3.6 L12.4 12.4 M12.4 3.6 L3.6 12.4" stroke="#b7bed4" stroke-width="1.15"/></svg>
<div class="term" style="left:412px;top:837px">[xottabi4@archlinux PidorOS 16bit]$ make run</div>
<div class="term" style="left:412px;top:859px">games/jumpr.c(18): Warning! W102: Type mismatch (warning)</div>
<div class="term" style="left:412px;top:879px">qemu-system-i386 -drive file=floppy.img,format=raw,index=0,if=floppy -boot a -m 16 -enable-kvm -vga std</div>
<div class="term" style="left:412px;top:899px">[xottabi4@archlinux PidorOS 16bit]$ make run</div>
<div class="term" style="left:412px;top:919px">owcc -bcom -march=i86 -Os -Igames -o games/jumpr.com games/jumpr.c</div>
<div class="term" style="left:412px;top:939px">games/jumpr.c(18): Warning! W102: Type mismatch (warning)</div>
<div class="term" style="left:412px;top:959px">games/jumpr.c(18): Note! I2003: source conversion type is "char"</div>
<div class="term" style="left:412px;top:979px">games/jumpr.c(18): Note! I2004: target conversion type is "char const *"</div>
<div class="term" style="left:412px;top:999px">games/jumpr.c(18): Warning! W102: Type mismatch (warning)</div>
<div class="term" style="left:412px;top:1019px">qemu-system-i386 -drive file=floppy.img,format=raw,index=0,if=floppy -boot a -m 16 -enable-kvm -vga std</div>
<div style="left:392px;top:857px;width:1393px;height:1px;background:#11131c;"></div>
<svg style="left:398px;top:903px;" width="10" height="10" viewBox="0 0 10 10"><circle cx="5" cy="5" r="3.4" fill="none" stroke="#4d556b" stroke-width="1.4"/></svg>
<div style="left:412px;top:1038px;width:8px;height:20px;border:1px solid #ffcc66"></div>
<div style="left:1786px;top:838px;width:1px;height:220px;background:#2a3042;"></div>
<div style="left:1787px;top:838px;width:4px;height:22px;background:#2487b5;"></div>
<div style="left:1787px;top:983px;width:4px;height:3px;background:#2487b5;"></div>
<div style="left:1787px;top:991px;width:4px;height:15px;background:#2487b5;"></div>
<div style="left:1787px;top:1011.5px;width:4px;height:6.5px;background:#2487b5;"></div>
<div style="left:1787px;top:1024px;width:4px;height:6px;background:#2487b5;"></div>
<div style="left:1787px;top:1031.6px;width:4px;height:7px;background:#2487b5;"></div>
<div style="left:1787px;top:1039.8px;width:4px;height:6.4px;background:#2487b5;"></div>
<div style="left:1787px;top:1046px;width:4px;height:5px;background:#5a5d66;"></div>
<div style="left:1787px;top:985px;width:13px;height:2px;background:#8a8d96;"></div>
<div style="left:1796px;top:858px;width:4px;height:6px;background:#f14c4c;"></div>
<div style="left:1796px;top:891px;width:4px;height:6px;background:#f14c4c;"></div>
<div style="left:1796px;top:926px;width:4px;height:6px;background:#f14c4c;"></div>
<div style="left:1796px;top:962px;width:4px;height:6px;background:#f14c4c;"></div>
<div style="left:1796px;top:972px;width:4px;height:6px;background:#f14c4c;"></div>
<div style="left:1796px;top:989px;width:4px;height:6px;background:#f14c4c;"></div>
<div style="left:1796px;top:1004px;width:4px;height:6px;background:#f14c4c;"></div>
<div style="left:1796px;top:1016px;width:4px;height:6px;background:#f14c4c;"></div>
<div style="left:1802px;top:827px;width:118px;height:22px;background:#323c58;"></div>
<div style="left:1801px;top:827px;width:1px;height:22px;background:#ffcc66;"></div>
<div style="left:1787px;top:838px;width:14px;height:1px;background:#39435c;"></div>
<svg style="left:1811px;top:831px;" width="16" height="16" viewBox="0 0 16 16"><rect x="1.6" y="1.6" width="12.8" height="12.8" rx="2" fill="none" stroke="#d3d6e4" stroke-width="1.1"/><path d="M3.6 5 L7.2 8 L3.6 11" fill="none" stroke="#d3d6e4" stroke-width="1.15"/><path d="M7.6 11.5 H12.6" stroke="#d3d6e4" stroke-width="1.15"/></svg>
<div style="left:1831px;top:828.5px;font-size:13.6px;line-height:19px;height:19px;white-space:pre;color:#d3d6e4;">make</div>
<svg style="left:1811px;top:853px;" width="16" height="16" viewBox="0 0 16 16"><rect x="1.6" y="1.6" width="12.8" height="12.8" rx="2" fill="none" stroke="#c9ccd6" stroke-width="1.1"/><path d="M3.6 5 L7.2 8 L3.6 11" fill="none" stroke="#c9ccd6" stroke-width="1.15"/><path d="M7.6 11.5 H12.6" stroke="#c9ccd6" stroke-width="1.15"/></svg>
<div style="left:1831px;top:850.5px;font-size:13.6px;line-height:19px;height:19px;white-space:pre;color:#8a93b4;">bash</div>
<svg style="left:52px;top:1060px;" width="16" height="18" viewBox="0 0 16 18"><path d="M3.4 7.2 L7.8 11.2 L3.4 15.2 M13 2.8 L9.2 6.4 L13 10" fill="none" stroke="#6b93d6" stroke-width="1.3"/></svg>
<svg style="left:85px;top:1062px;" width="14" height="14" viewBox="0 0 14 14"><circle cx="7" cy="7" r="5.7" fill="none" stroke="#8790b0" stroke-width="1.1"/><path d="M4.8 4.8 L9.2 9.2 M9.2 4.8 L4.8 9.2" stroke="#8790b0" stroke-width="1.1"/></svg>
<div style="left:103px;top:1060.0px;font-size:12.6px;line-height:18px;height:18px;white-space:pre;color:#8790b0;">0</div>
<svg style="left:114px;top:1062px;" width="14" height="14" viewBox="0 0 14 14"><path d="M7 1.8 L12.8 12 H1.2Z" fill="none" stroke="#8790b0" stroke-width="1.1" stroke-linejoin="round"/><path d="M7 5.6 V8.8 M7 10 V11" stroke="#8790b0" stroke-width="1.1"/></svg>
<div style="left:132px;top:1060.0px;font-size:12.6px;line-height:18px;height:18px;white-space:pre;color:#8790b0;">0</div>
<div style="left:1585px;top:1060.5px;font-size:12.1px;line-height:17px;height:17px;white-space:pre;color:#8790b0;letter-spacing:-0.05px;">Ln 18, Col 29</div>
<div style="left:1673px;top:1060.5px;font-size:12.1px;line-height:17px;height:17px;white-space:pre;color:#8790b0;letter-spacing:-0.05px;">Spaces: 4</div>
<div style="left:1741px;top:1060.5px;font-size:12.1px;line-height:17px;height:17px;white-space:pre;color:#8790b0;letter-spacing:-0.05px;">UTF-8</div>
<div style="left:1790px;top:1060.5px;font-size:12.1px;line-height:17px;height:17px;white-space:pre;color:#8790b0;letter-spacing:-0.05px;">LF</div>
<div style="left:1820px;top:1060.5px;font-size:12.1px;line-height:17px;height:17px;white-space:pre;color:#8790b0;letter-spacing:-0.05px;">{ }</div>
<div style="left:1840px;top:1060.5px;font-size:12.1px;line-height:17px;height:17px;white-space:pre;color:#8790b0;letter-spacing:-0.05px;">C</div>
<svg style="left:1864px;top:1061px;" width="17" height="16" viewBox="0 0 17 16"><path d="M8.2 1.2 C5.4 .2 2.8 1.4 2.8 4.2 C2.8 5.2 3 5.9 3.2 6.3 C1.5 7.1 .4 8.6 .4 10.3 C.4 13 3.8 15 8.2 15 S16 13 16 10.3 C16 8.6 14.9 7.1 13.2 6.3 C13.4 5.9 13.6 5.2 13.6 4.2 C13.6 1.4 11 .2 8.2 1.2Z" fill="#8d9ac6"/><rect x="3.9" y="2.5" width="3.4" height="3.1" rx="1.3" fill="#181c28"/><rect x="9.1" y="2.5" width="3.4" height="3.1" rx="1.3" fill="#181c28"/><path d="M3.3 8.1 L7.6 8.1 L8.2 7.3 L8.8 8.1 L13.1 8.1 V11.3 C11.4 12.8 5 12.8 3.3 11.3Z" fill="#181c28"/><rect x="5.6" y="8.9" width="1.3" height="2.6" fill="#8d9ac6"/><rect x="9.5" y="8.9" width="1.3" height="2.6" fill="#8d9ac6"/></svg>
<svg style="left:1897px;top:1060px;" width="16" height="16" viewBox="0 0 16 16"><path d="M9 2.2 a4.3 4.3 0 0 0 -5.8 4.1 v4.6 l-1.2 1.9 v.9 h11 v-.9 l-1.2 -1.9 V8.8" fill="none" stroke="#8d9ac6" stroke-width="1.15"/><path d="M6 14 a1.5 1.5 0 0 0 3 0" fill="none" stroke="#8d9ac6" stroke-width="1.15"/><circle cx="11.2" cy="4.6" r="2.7" fill="#8d9ac6"/></svg>
<div style="left:441px;top:556px;width:652px;height:484px;background:#2e323e;border:2px solid #566078;border-radius:12px;box-shadow:0 2px 8px rgba(0,0,0,.22)"></div>
<svg style="left:459px;top:567px;" width="22" height="22" viewBox="0 0 32 32"><defs><linearGradient id="qg22" x1="0" y1="0" x2="0" y2="1"><stop offset="0" stop-color="#fff"/><stop offset=".5" stop-color="#9a9a9a"/><stop offset="1" stop-color="#000"/></linearGradient></defs>
<circle cx="16" cy="15.5" r="15.5" fill="#000"/>
<ellipse cx="17" cy="11.5" rx="10.5" ry="9.5" fill="url(#qg22)"/>
<path d="M23 29 L31.5 30.8 L26.6 23.6Z" fill="#000"/>
<path d="M7.6 11 C8.6 4 15.6 0.8 21.2 4.2 L26.2 8.8 L20.6 9.8 C18.2 12.6 18.6 15.6 19.6 18.6 C20 23 17.6 27.4 15.2 30.4 C15 25 12.4 21.6 10.2 18.4 C8.4 15.8 7.2 14 7.6 11Z" fill="#f60"/>
<path d="M20.6 9.8 L26.2 8.8 L22 7.6Z" fill="#ffb36b"/><path d="M15.8 6.6 l3.6 .5" stroke="#000" stroke-width="1.3"/></svg>
<svg style="left:500px;top:572px;" width="12" height="12" viewBox="0 0 12 12"><circle cx="6" cy="6" r="4.2" fill="#eceff4"/></svg>
<div style="left:729.5px;top:567.0px;font-size:12.9px;line-height:18px;height:18px;white-space:pre;color:#dfe2ea;">QEMU</div>
<div style="left:987.5px;top:580.5px;width:9px;height:2px;background:#e6e9ef;"></div>
<svg style="left:1022px;top:572px;" width="12" height="12" viewBox="0 0 12 12"><rect x="2.9" y="3.2" width="6.2" height="6" fill="none" stroke="#e6e9ef" stroke-width="1.8"/></svg>
<svg style="left:1058px;top:572px;" width="12" height="12" viewBox="0 0 12 12"><path d="M2.6 2.6 L9.6 9.6 M9.6 2.6 L2.6 9.6" stroke="#e6e9ef" stroke-width="1.8"/></svg>
<div style="left:456px;top:599.5px;font-size:13.6px;line-height:19px;height:19px;white-space:pre;color:#b9d0f2;">Machine</div>
<div style="left:526px;top:599.5px;font-size:13.6px;line-height:19px;height:19px;white-space:pre;color:#b9d0f2;">View</div>
<div style="left:447px;top:622px;width:640px;height:400px;background:#0000aa;"></div>
<div style="left:447px;top:622px;width:352px;height:16px;background:#000;"></div>
<div style="left:447px;top:622px;height:16px;width:352px;overflow:hidden"><div style="left:0;top:2.9px;font:700 13.3px/10px 'Liberation Mono','DejaVu Sans Mono',monospace;color:#aaa;white-space:pre;transform-origin:0 0;transform:scale(2.005,1.5);letter-spacing:0">In skibidi - we trust.</div></div>
</body></html>
